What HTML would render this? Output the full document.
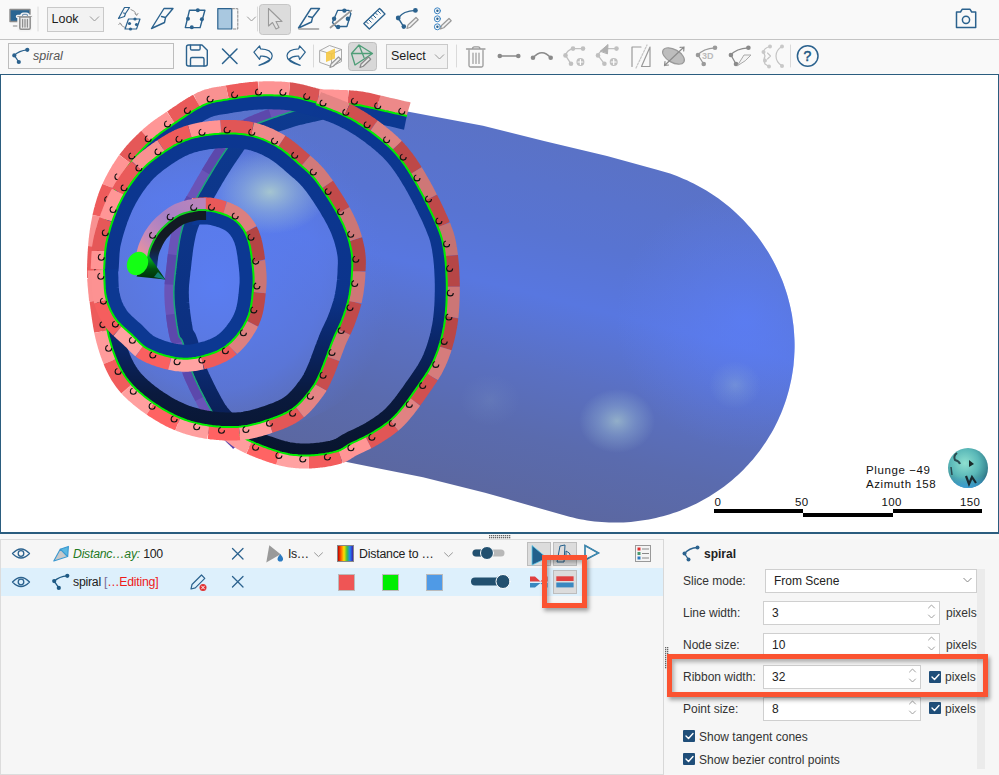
<!DOCTYPE html>
<html><head><meta charset="utf-8">
<style>
*{box-sizing:border-box;margin:0;padding:0}
html,body{width:999px;height:775px;overflow:hidden;background:#f8f8f8;font-family:"Liberation Sans",sans-serif;color:#222}
.abs{position:absolute}
#tb1{left:0;top:0;width:999px;height:39px;background:#f9f9f9}
#sep1{left:0;top:39px;width:999px;height:1px;background:#c4c4c4}
#tb2{left:0;top:40px;width:999px;height:34px;background:#f9f9f9}
#vp{left:0;top:74px;width:999px;height:460px;border:1px solid #2b5d7f;border-width:1px 1px 2px 1px;background:#fff;overflow:hidden}
.dd{border:1px solid #c9c9c9;background:#f2f2f2;font-size:12.5px;color:#222}
.sepv{width:1px;background:#dcdcdc}
.txt{white-space:nowrap}
#panelL{left:0;top:539px;width:664px;height:236px;border:1px solid #dcdcdc;border-right-color:#d8d8d8;background:#f6f6f6}
#panelR{left:664px;top:539px;width:335px;height:236px;background:#f6f6f6}
.lbl{font-size:12px;color:#333}
.inp{background:#fff;border:1px solid #cfcfcf;font-size:12.5px;color:#222}
.hud{font-size:11.5px;color:#111;letter-spacing:0.35px}
.chk{width:12px;height:12px;background:#1f4e79;border-radius:1px}
</style></head>
<body>
<div id="tb1" class="abs">
<svg class="abs" style="left:0;top:0" width="999" height="39">
<g fill="none" stroke-linejoin="round" stroke-linecap="round">
<!-- monitor trash -->
<rect x="10" y="9.5" width="20" height="12" fill="#2a6592" stroke="#8c8c8c" stroke-width="1.4"/>
<path d="M13.5 26 h4" stroke="#aaa" stroke-width="1.5"/>
<path d="M17.5 16.5 h14 M19 17.5 v10.5 q0 2 2 2 h7.5 q2 0 2-2 V17.5 M21.8 16 q0-1.8 1.8-1.8 h2.6 q1.8 0 1.8 1.8" stroke="#f4f4f4" stroke-width="3.4"/>
<path d="M19.8 17 h10.4 v11 q0 1.2-1.2 1.2 h-8 q-1.2 0-1.2-1.2 Z" fill="#ececec" stroke="#8f8f8f" stroke-width="1.5"/>
<path d="M17.8 16.5 h13.5" stroke="#9a9a9a" stroke-width="1.2"/>
<path d="M22.5 15.6 q0-1.2 1.2-1.2 h2.6 q1.2 0 1.2 1.2" stroke="#7a9ab8" stroke-width="1.2"/>
<path d="M22.6 19.5 v7.5 M25 19.5 v7.5 M27.4 19.5 v7.5" stroke="#8f8f8f" stroke-width="1.3"/>
<path d="M38 7 v24" stroke="#dadada" stroke-width="1"/>
<!-- icon cycle -->
<path d="M118.5 18.5 L124.5 7.5 H129.5 L125.5 13.5 L124.5 16.5 Z M123.5 13 l2 0.5" stroke="#2b628e" stroke-width="1.2"/>
<path d="M131 9.5 q4.5 1 5.5 5.5 M135 13.8 l1.6 1.6 l1.4-2" stroke="#999" stroke-width="1"/>
<path d="M126 28 q-4.5-1-6-5 M121.5 24.8 l-1.2-1.8 l-1.6 1.6" stroke="#999" stroke-width="1"/>
<path d="M128.5 19 H140 L136.5 29 H125 Z" stroke="#2b628e" stroke-width="1.2"/>
<circle cx="135" cy="19" r="1.6" fill="#2b628e"/><circle cx="129.5" cy="23.5" r="1.6" fill="#2b628e"/><circle cx="136.5" cy="24.5" r="1.6" fill="#2b628e"/><circle cx="130.5" cy="29" r="1.6" fill="#2b628e"/>
<!-- knife -->
<path d="M151.5 28.5 L164 8.5 H173 L165.5 17.5 L164.5 22.5 Z M161.5 16.5 L165.5 17.5" stroke="#2b628e" stroke-width="1.4"/>
<!-- plane dots -->
<path d="M189.5 10.2 H204.9 L200.1 27.6 H185.3 Z" stroke="#2b628e" stroke-width="1.4"/>
<circle cx="197.8" cy="10.2" r="2" fill="#2b628e"/><circle cx="188" cy="18.8" r="2" fill="#2b628e"/><circle cx="201.9" cy="19.2" r="2" fill="#2b628e"/><circle cx="191.8" cy="27.3" r="2" fill="#2b628e"/>
<!-- box split -->
<rect x="217.8" y="8.7" width="14" height="20.3" fill="#a9c8e0" stroke="#2b628e" stroke-width="1.2"/>
<path d="M232 8.7 h5.8 v20.3 h-5.8" stroke="#888" stroke-width="1" stroke-dasharray="2.5 1.5"/>
<path d="M247.5 17 l4 4 l4-4" stroke="#999" stroke-width="1"/>
<path d="M257.5 7 v24" stroke="#dadada" stroke-width="1"/>
</g>
<rect x="259.5" y="4.5" width="31" height="30" rx="3" fill="#dcdcdc" stroke="#c6c6c6"/>
<g fill="none" stroke-linejoin="round" stroke-linecap="round">
<path d="M268.5 8.5 V26 L272.5 22.5 L276 29 L279 27.5 L276 21.5 H282 Z" stroke="#9a9a9a" stroke-width="1.1" fill="#e2e2e2"/>
<!-- knife line -->
<path d="M298.5 28 L311 8.5 H319.5 L312.5 17.5 L311.5 22 Z M308.5 16.5 L312.5 17.5" stroke="#2b628e" stroke-width="1.4"/>
<path d="M299 29 H318.5" stroke="#999" stroke-width="1.6"/>
<!-- plane cut -->
<path d="M337.6 10.4 H348.9 L350.9 13.8 L346.9 26.5 H336 L332.5 22.5 L334.1 18.7 Z" stroke="#2b628e" stroke-width="1.3"/>
<circle cx="344.4" cy="10.6" r="2.2" fill="#2b628e"/><circle cx="334.1" cy="18.7" r="2.2" fill="#2b628e"/><circle cx="347.9" cy="18.7" r="2.2" fill="#2b628e"/><circle cx="338.1" cy="27" r="2.2" fill="#2b628e"/>
<path d="M330.5 27.5 L351.3 10.6" stroke="#999" stroke-width="1.8"/>
<!-- ruler -->
<path d="M363.8 23.5 L379.5 8.5 L385 14 L369.3 29 Z" stroke="#2b628e" stroke-width="1.3"/>
<path d="M366.5 22 l1.6 1.6 M368.8 19.8 l2.4 2.4 M371.1 17.6 l1.6 1.6 M373.4 15.4 l2.4 2.4 M375.7 13.2 l1.6 1.6 M378 11 l2.4 2.4 M380.3 8.8 l1.6 1.6" stroke="#2b628e" stroke-width="1"/>
<!-- curve pencil -->
<path d="M415.4 10.4 Q403 11 398.2 18 L403.8 26.8" stroke="#2b628e" stroke-width="1.4"/>
<circle cx="415.4" cy="10.4" r="2.4" fill="#2b628e"/><circle cx="398.2" cy="18" r="2.4" fill="#2b628e"/><circle cx="403.8" cy="26.6" r="2.3" fill="#2b628e"/>
<path d="M407 28.5 L408 25 L416 17.5 L418.2 19.7 L410.3 27.3 Z" stroke="#999" stroke-width="1.2" fill="#f0f0f0"/>
<!-- dots pencil -->
<circle cx="437.4" cy="10.8" r="3" stroke="#3a84c4" stroke-width="1"/><circle cx="437.4" cy="10.8" r="1.2" fill="#2b628e"/>
<circle cx="437.4" cy="18.8" r="3" stroke="#3a84c4" stroke-width="1"/><circle cx="437.4" cy="18.8" r="1.2" fill="#2b628e"/>
<circle cx="437.4" cy="26.8" r="3" stroke="#3a84c4" stroke-width="1"/><circle cx="437.4" cy="26.8" r="1.2" fill="#2b628e"/>
<path d="M440.5 29 L441.5 25.5 L449 18.5 L451.2 20.7 L443.8 27.8 Z" stroke="#999" stroke-width="1.2" fill="#f0f0f0"/>
<!-- camera -->
<path d="M956.5 12 h4 l1.8-2.8 h7.6 l1.8 2.8 h4 v15.5 h-19.2 Z" stroke="#2b628e" stroke-width="1.5"/>
<circle cx="966" cy="19.8" r="3.6" stroke="#2b628e" stroke-width="1.5"/>
</g>
</svg>
<div class="abs dd" style="left:47px;top:7px;width:57px;height:25px"></div>
<div class="abs txt" style="left:51.5px;top:12.2px;font-size:12.5px;color:#1d1d1d">Look</div>
<svg class="abs" style="left:89px;top:15px" width="11" height="8"><path d="M1 1.5 l4.5 4.5 l4.5-4.5" fill="none" stroke="#999" stroke-width="1"/></svg>

</div>
<div id="sep1" class="abs"></div>
<div id="tb2" class="abs">
<div class="abs" style="left:8px;top:3px;width:166px;height:26px;border:1px solid #bdbdbd;background:#f8f8f8"></div>
<svg class="abs" style="left:0;top:0" width="999" height="34">
<g fill="none" stroke-linejoin="round" stroke-linecap="round">
<path d="M27.3 9.8 Q19 10.5 14.3 15.4 L18.8 22" stroke="#2b628e" stroke-width="1.3"/>
<circle cx="27.3" cy="9.8" r="2.1" fill="#2b628e"/><circle cx="14.3" cy="15.4" r="2.1" fill="#2b628e"/><circle cx="18.8" cy="22" r="2.1" fill="#2b628e"/>
<!-- save -->
<path d="M186.5 7 q0-2 2-2 h13.5 l5.3 5.3 v13.7 q0 2-2 2 h-16.8 q-2 0-2-2 Z" stroke="#2b628e" stroke-width="1.4"/>
<path d="M190.5 5.2 v3.5 q0 1.3 1.3 1.3 h7 q1.3 0 1.3-1.3 v-3.5 M190.5 26 v-7 q0-1.5 1.5-1.5 h10.5 q1.5 0 1.5 1.5 v7" stroke="#2b628e" stroke-width="1.4"/>
<!-- X -->
<path d="M222.5 9 L237 23.5 M237 9 L222.5 23.5" stroke="#2b628e" stroke-width="1.5"/>
<!-- undo -->
<path d="M253.9 12.2 L259.6 5.9 L260.5 8.8 Q271.5 9.2 272.2 15.8 Q272.5 21.8 259 25.4 Q269.5 20.5 269.8 19 Q266.5 15.6 260.5 16.2 L259.6 19.4 Z" stroke="#2b628e" stroke-width="1.2"/>
<!-- redo -->
<path d="M 305.3 12.2 L 299.6 5.9 L 298.7 8.8 Q 287.7 9.2 287.0 15.8 Q 286.7 21.8 300.2 25.4 Q 289.7 20.5 289.4 19.0 Q 292.7 15.6 298.7 16.2 L 299.6 19.4 Z" stroke="#2b628e" stroke-width="1.2"/>
<path d="M313.5 5 v22" stroke="#dadada" stroke-width="1"/>
<!-- cube pencil -->
<path d="M320 10.5 L329.5 5.5 L341.5 9.5 L341.5 21.5 L331.5 26.5 L320 22.5 Z M320 10.5 L331.5 14 L341.5 9.5 M331.5 14 V26.5" stroke="#a0a0a0" stroke-width="0.9"/>
<path d="M326 12.5 L335 8.5 V18.5 L326 22 Z" fill="#f5c842" stroke="none" opacity="0.9"/>
<path d="M330 27.5 L331 24 L338.5 17 L340.7 19.2 L333.3 26.3 Z" stroke="#999" stroke-width="1.2" fill="#f0f0f0"/>
</g>
<rect x="348.5" y="2.5" width="28" height="28" rx="3" fill="#d8d8d8" stroke="#bfbfbf"/>
<g fill="none" stroke-linejoin="round" stroke-linecap="round">
<path d="M351.5 13.5 L359 5 L372.5 13.5 L355 25 Z M359 5 L364 17.5 M351.5 13.5 L372.5 13.5" stroke="#4f9e78" stroke-width="1.3"/>
<path d="M360 27.5 L361 24 L368.5 17 L370.7 19.2 L363.3 26.3 Z" stroke="#888" stroke-width="1.2" fill="#e6e6e6"/>
<path d="M456.5 5 v22" stroke="#dadada" stroke-width="1"/>
</g>
</svg>
<div class="abs txt" style="left:33px;top:9px;font-size:12.5px;font-style:italic;color:#555">spiral</div>
<div class="abs dd" style="left:386px;top:4px;width:62px;height:25px"></div>
<div class="abs txt" style="left:391px;top:9px;font-size:12.5px;color:#1d1d1d">Select</div>
<svg class="abs" style="left:434px;top:13px" width="11" height="8"><path d="M1 1.5 l4.5 4.5 l4.5-4.5" fill="none" stroke="#999" stroke-width="1"/></svg>
<svg class="abs" style="left:0;top:0" width="999" height="34">
<g fill="none" stroke-linejoin="round" stroke-linecap="round">
<!-- trash -->
<path d="M466.5 9 H485 M469 10.5 V25.5 q0 1.5 1.5 1.5 h11 q1.5 0 1.5-1.5 V10.5 M472.5 8.8 q0-2 2-2 h3.5 q2 0 2 2" stroke="#9a9a9a" stroke-width="1.3"/>
<path d="M473 13 v10.5 M476 13 v10.5 M479 13 v10.5" stroke="#9a9a9a" stroke-width="1.2"/>
<!-- line -->
<path d="M500 16 H518" stroke="#8a8a8a" stroke-width="1.5"/>
<circle cx="499.8" cy="16" r="2.3" fill="#8a8a8a"/><circle cx="518.3" cy="16" r="2.3" fill="#8a8a8a"/>
<!-- arc -->
<path d="M533 17.8 Q542 7.5 550.7 17.8" stroke="#8a8a8a" stroke-width="1.5"/>
<circle cx="533" cy="17.8" r="2.3" fill="#8a8a8a"/><circle cx="550.7" cy="17.8" r="2.3" fill="#8a8a8a"/>
<!-- node add -->
<path d="M583 8.6 H573 Q567 10 565.5 15.4 L571 23.8" stroke="#c0c0c0" stroke-width="1.3"/>
<circle cx="573" cy="8.6" r="2.3" fill="#c0c0c0"/><circle cx="583" cy="8.6" r="2.3" fill="#c0c0c0"/><circle cx="565.5" cy="15.4" r="2.3" fill="#c0c0c0"/><circle cx="571" cy="23.8" r="2.3" fill="#c0c0c0"/>
<circle cx="580.4" cy="22" r="4" fill="#c0c0c0"/><path d="M578 22 h4.8 M580.4 19.6 v4.8" stroke="#fff" stroke-width="1.2"/>
<!-- node add 2 -->
<path d="M616.5 8.6 H607 Q600 10 598 15.4 L604.4 23.8" stroke="#c0c0c0" stroke-width="1.3"/>
<path d="M600.5 11 L608 4.5 L607.5 13.5 Z" fill="#b0b0b0" stroke="#b0b0b0" stroke-width="1"/>
<circle cx="616.5" cy="8.6" r="2.3" fill="#c0c0c0"/><circle cx="598" cy="15.4" r="2.3" fill="#c0c0c0"/><circle cx="604.4" cy="23.8" r="2.3" fill="#c0c0c0"/>
<circle cx="613.7" cy="22" r="4" fill="#c0c0c0"/><path d="M611.3 22 h4.8 M613.7 19.6 v4.8" stroke="#fff" stroke-width="1.2"/>
<!-- slash -->
<path d="M632 26.5 V7 L641 7 M650 7 V26.5 H641.5 Z" stroke="#9a9a9a" stroke-width="1.2"/>
<path d="M636 28 L647 5" stroke="#c4c4c4" stroke-width="1.2" stroke-dasharray="2 1.5"/>
<!-- disc -->
<ellipse cx="673.5" cy="16" rx="12" ry="6.5" transform="rotate(30 673.5 16)" fill="#bdbdbd" stroke="#9a9a9a" stroke-width="1.2"/>
<path d="M664.5 25.5 L684 7 M664.5 25.5 l0.5-4 M664.5 25.5 l4-0.5 M684 7 l-4 0.3 M684 7 l-0.3 4" stroke="#8c8c8c" stroke-width="1.2"/>
<!-- 3d curve -->
<path d="M715 7.8 Q703 8.5 698 15 L703.7 24" stroke="#9a9a9a" stroke-width="1.3"/>
<circle cx="715" cy="7.8" r="2.3" fill="#9a9a9a"/><circle cx="698" cy="15" r="2.3" fill="#9a9a9a"/><circle cx="703.7" cy="24" r="2.3" fill="#9a9a9a"/>
<!-- curve knife -->
<path d="M748.4 7.8 Q736 8.5 730.9 15 L736 24" stroke="#8a8a8a" stroke-width="1.3"/>
<circle cx="748.4" cy="7.8" r="2.3" fill="#8a8a8a"/><circle cx="730.9" cy="15" r="2.3" fill="#8a8a8a"/><circle cx="736" cy="24" r="2.3" fill="#8a8a8a"/>
<path d="M737.5 25.5 L744 15 H751 L745.5 20.5 Z" stroke="#aaa" stroke-width="1" fill="#f4f4f4"/>
<!-- split -->
<path d="M770 6.5 Q764 8 763.5 12 L765 16 Q763 20 765 24 L769 26.5 M782 6.5 Q776 10 776 16 Q776 22 782 26" stroke="#c4c4c4" stroke-width="1.2"/>
<path d="M767.5 13 l3 3 l-3 3" stroke="#c4c4c4" stroke-width="1.1"/>
<circle cx="770" cy="6.5" r="2" fill="#c8c8c8"/><circle cx="763.5" cy="12" r="2" fill="#c8c8c8"/><circle cx="765" cy="20.5" r="2" fill="#c8c8c8"/><circle cx="769" cy="26.5" r="2" fill="#c8c8c8"/><circle cx="782" cy="6.5" r="2" fill="#c8c8c8"/><circle cx="782" cy="26" r="2" fill="#c8c8c8"/>
<path d="M790.5 5 v22" stroke="#dadada" stroke-width="1"/>
<!-- help -->
<circle cx="807.7" cy="16" r="10.3" stroke="#2b628e" stroke-width="1.5"/>
</g>
</svg>
<div class="abs txt" style="left:702px;top:11px;font-size:9px;font-weight:bold;color:#bbb">3D</div>
<div class="abs txt" style="left:803.6px;top:8px;font-size:14px;color:#1f5a84;-webkit-text-stroke:0.5px #1f5a84">?</div>


</div>
<div id="vp" class="abs">
<svg class="abs" style="left:-1px;top:-1px" width="999" height="460" viewBox="0 74 999 460">
<defs>
<linearGradient id="capg" gradientUnits="userSpaceOnUse" x1="680" y1="173" x2="590" y2="527">
<stop offset="0" stop-color="#5a72c6"/><stop offset="0.25" stop-color="#5874d2"/><stop offset="0.42" stop-color="#5877e0"/><stop offset="0.62" stop-color="#5a70c2"/><stop offset="0.8" stop-color="#5a6bae"/><stop offset="1" stop-color="#5b67a0"/>
</linearGradient>
<radialGradient id="capr" gradientUnits="userSpaceOnUse" cx="745" cy="320" r="130"><stop offset="0" stop-color="#5c80ff" stop-opacity="0.6"/><stop offset="1" stop-color="#6080f8" stop-opacity="0"/></radialGradient>
<radialGradient id="inr" gradientUnits="userSpaceOnUse" cx="215" cy="285" r="175"><stop offset="0" stop-color="#5a7ef4" stop-opacity="0.95"/><stop offset="0.6" stop-color="#5a7cf0" stop-opacity="0.6"/><stop offset="1" stop-color="#5a78e0" stop-opacity="0"/></radialGradient>
<radialGradient id="hl" cx="0.5" cy="0.5" r="0.5"><stop offset="0" stop-color="#a9c9cf" stop-opacity="0.95"/><stop offset="0.5" stop-color="#98b8d4" stop-opacity="0.5"/><stop offset="1" stop-color="#98b8d4" stop-opacity="0"/></radialGradient>
<linearGradient id="bandg" gradientUnits="userSpaceOnUse" x1="0" y1="90" x2="0" y2="460">
<stop offset="0" stop-color="#0c3892"/><stop offset="0.55" stop-color="#0c348c"/><stop offset="0.7" stop-color="#0a2462"/><stop offset="0.82" stop-color="#0a1a3e"/><stop offset="1" stop-color="#08142c"/>
</linearGradient>
<linearGradient id="s0g" gradientUnits="userSpaceOnUse" x1="0" y1="236" x2="0" y2="268"><stop offset="0" stop-color="#121a24"/><stop offset="0.4" stop-color="#142030"/><stop offset="1" stop-color="#0c3a8a"/></linearGradient>
<linearGradient id="s0p" gradientUnits="userSpaceOnUse" x1="140" y1="262" x2="200" y2="205"><stop offset="0" stop-color="#f49494"/><stop offset="0.25" stop-color="#c88ab8"/><stop offset="0.6" stop-color="#a880c4"/><stop offset="1" stop-color="#b884bc"/></linearGradient>
<linearGradient id="kband" gradientUnits="userSpaceOnUse" x1="0" y1="110" x2="0" y2="440">
<stop offset="0" stop-color="#0d3a90"/><stop offset="0.7" stop-color="#0c3080"/><stop offset="1" stop-color="#0a1a48"/>
</linearGradient>
</defs>
<path d="M408.6 111.7 L483.0 125.7 L545.0 141.2 L607.0 156.0 L656.1 169.4 L659.6 170.4 L663.1 171.4 L666.6 172.5 L670.1 173.6 L673.5 174.8 L676.9 176.1 L680.3 177.5 L683.7 178.9 L687.0 180.3 L690.3 181.9 L693.6 183.5 L696.8 185.2 L700.0 186.9 L703.2 188.7 L706.3 190.6 L709.4 192.5 L712.5 194.5 L715.5 196.5 L718.5 198.6 L721.4 200.8 L724.3 203.0 L727.2 205.3 L730.0 207.6 L732.8 210.0 L735.5 212.4 L738.1 214.9 L740.7 217.5 L743.3 220.0 L745.8 222.7 L748.2 225.4 L750.6 228.1 L753.0 230.9 L755.3 233.7 L757.5 236.6 L759.7 239.5 L761.8 242.4 L763.8 245.4 L765.8 248.5 L767.8 251.5 L769.6 254.6 L771.4 257.8 L773.2 260.9 L774.9 264.2 L776.5 267.4 L778.0 270.7 L779.5 274.0 L780.9 277.3 L782.3 280.6 L783.6 284.0 L784.8 287.4 L785.9 290.8 L787.0 294.3 L788.0 297.8 L788.9 301.2 L789.8 304.7 L790.6 308.3 L791.3 311.8 L792.0 315.3 L792.5 318.9 L793.0 322.4 L793.5 326.0 L793.8 329.6 L794.1 333.2 L794.3 336.8 L794.5 340.3 L794.6 343.9 L794.6 347.5 L794.5 351.1 L794.3 354.7 L794.1 358.3 L793.8 361.8 L793.5 365.4 L793.0 369.0 L792.5 372.5 L791.9 376.1 L791.3 379.6 L790.5 383.1 L789.7 386.6 L788.9 390.0 L787.9 393.5 L786.9 396.9 L785.9 400.3 L784.7 403.7 L783.5 407.1 L782.2 410.4 L780.9 413.8 L779.4 417.0 L778.0 420.3 L776.4 423.5 L774.8 426.7 L773.1 429.9 L771.4 433.0 L769.5 436.1 L767.7 439.1 L765.7 442.2 L763.7 445.1 L761.7 448.1 L759.6 451.0 L757.4 453.8 L755.2 456.6 L752.9 459.4 L750.5 462.1 L748.1 464.7 L745.7 467.3 L743.2 469.9 L740.6 472.4 L738.0 474.9 L735.3 477.3 L732.6 479.7 L729.9 482.0 L727.0 484.2 L724.2 486.4 L721.3 488.5 L718.4 490.6 L715.4 492.6 L712.3 494.6 L709.3 496.5 L706.2 498.3 L703.0 500.1 L699.9 501.8 L696.7 503.4 L693.4 505.0 L690.1 506.5 L686.8 508.0 L683.5 509.3 L680.1 510.7 L676.7 511.9 L673.3 513.1 L669.9 514.2 L666.4 515.3 L662.9 516.2 L659.4 517.1 L655.9 518.0 L652.3 518.8 L648.8 519.5 L645.2 520.1 L641.6 520.6 L638.0 521.1 L634.4 521.5 L630.8 521.9 L627.2 522.2 L623.5 522.4 L619.9 522.5 L616.3 522.5 L612.6 522.5 L609.0 522.4 L605.4 522.3 L601.7 522.0 L598.1 521.7 L594.5 521.4 L590.8 520.9 L587.2 520.4 L583.6 519.8 L580.1 519.2 L576.5 518.4 L572.9 517.6 L569.4 516.8 L565.9 515.8 L562.3 514.8 L485.0 492.7 L423.0 477.2 L376.5 468.0 L345.5 461.7 L300.0 458.0 L240.0 445.0 L170.0 420.0 L120.0 380.0 L98.0 320.0 L96.0 250.0 L112.0 185.0 L160.0 130.0 L230.0 100.0 L300.0 92.0 L360.0 98.0 Z" fill="url(#capg)"/>
<path d="M408.6 111.7 L483.0 125.7 L545.0 141.2 L607.0 156.0 L656.1 169.4 L659.6 170.4 L663.1 171.4 L666.6 172.5 L670.1 173.6 L673.5 174.8 L676.9 176.1 L680.3 177.5 L683.7 178.9 L687.0 180.3 L690.3 181.9 L693.6 183.5 L696.8 185.2 L700.0 186.9 L703.2 188.7 L706.3 190.6 L709.4 192.5 L712.5 194.5 L715.5 196.5 L718.5 198.6 L721.4 200.8 L724.3 203.0 L727.2 205.3 L730.0 207.6 L732.8 210.0 L735.5 212.4 L738.1 214.9 L740.7 217.5 L743.3 220.0 L745.8 222.7 L748.2 225.4 L750.6 228.1 L753.0 230.9 L755.3 233.7 L757.5 236.6 L759.7 239.5 L761.8 242.4 L763.8 245.4 L765.8 248.5 L767.8 251.5 L769.6 254.6 L771.4 257.8 L773.2 260.9 L774.9 264.2 L776.5 267.4 L778.0 270.7 L779.5 274.0 L780.9 277.3 L782.3 280.6 L783.6 284.0 L784.8 287.4 L785.9 290.8 L787.0 294.3 L788.0 297.8 L788.9 301.2 L789.8 304.7 L790.6 308.3 L791.3 311.8 L792.0 315.3 L792.5 318.9 L793.0 322.4 L793.5 326.0 L793.8 329.6 L794.1 333.2 L794.3 336.8 L794.5 340.3 L794.6 343.9 L794.6 347.5 L794.5 351.1 L794.3 354.7 L794.1 358.3 L793.8 361.8 L793.5 365.4 L793.0 369.0 L792.5 372.5 L791.9 376.1 L791.3 379.6 L790.5 383.1 L789.7 386.6 L788.9 390.0 L787.9 393.5 L786.9 396.9 L785.9 400.3 L784.7 403.7 L783.5 407.1 L782.2 410.4 L780.9 413.8 L779.4 417.0 L778.0 420.3 L776.4 423.5 L774.8 426.7 L773.1 429.9 L771.4 433.0 L769.5 436.1 L767.7 439.1 L765.7 442.2 L763.7 445.1 L761.7 448.1 L759.6 451.0 L757.4 453.8 L755.2 456.6 L752.9 459.4 L750.5 462.1 L748.1 464.7 L745.7 467.3 L743.2 469.9 L740.6 472.4 L738.0 474.9 L735.3 477.3 L732.6 479.7 L729.9 482.0 L727.0 484.2 L724.2 486.4 L721.3 488.5 L718.4 490.6 L715.4 492.6 L712.3 494.6 L709.3 496.5 L706.2 498.3 L703.0 500.1 L699.9 501.8 L696.7 503.4 L693.4 505.0 L690.1 506.5 L686.8 508.0 L683.5 509.3 L680.1 510.7 L676.7 511.9 L673.3 513.1 L669.9 514.2 L666.4 515.3 L662.9 516.2 L659.4 517.1 L655.9 518.0 L652.3 518.8 L648.8 519.5 L645.2 520.1 L641.6 520.6 L638.0 521.1 L634.4 521.5 L630.8 521.9 L627.2 522.2 L623.5 522.4 L619.9 522.5 L616.3 522.5 L612.6 522.5 L609.0 522.4 L605.4 522.3 L601.7 522.0 L598.1 521.7 L594.5 521.4 L590.8 520.9 L587.2 520.4 L583.6 519.8 L580.1 519.2 L576.5 518.4 L572.9 517.6 L569.4 516.8 L565.9 515.8 L562.3 514.8 L485.0 492.7 L423.0 477.2 L376.5 468.0 L345.5 461.7 L300.0 458.0 L240.0 445.0 L170.0 420.0 L120.0 380.0 L98.0 320.0 L96.0 250.0 L112.0 185.0 L160.0 130.0 L230.0 100.0 L300.0 92.0 L360.0 98.0 Z" fill="url(#capr)"/>
<ellipse cx="250" cy="270" rx="160" ry="160" fill="url(#inr)"/>
<ellipse cx="270" cy="192" rx="58" ry="42" fill="url(#hl)"/>
<ellipse cx="617" cy="421" rx="38" ry="32" fill="url(#hl)" opacity="0.75"/>
<ellipse cx="735" cy="385" rx="26" ry="24" fill="url(#hl)" opacity="0.3"/>
<ellipse cx="490" cy="400" rx="30" ry="26" fill="url(#hl)" opacity="0.12"/>
<path d="M245.3 436.7L243.8 435.2L242.3 433.7L240.8 432.3L239.3 430.8L237.8 429.4L236.3 427.9L234.9 426.5L233.5 425.1L232.1 423.7L230.8 422.3L229.5 420.9L228.0 419.3L226.7 417.9L225.4 416.6L224.3 415.5L223.3 414.3L222.2 413.1L221.2 411.8L220.1 410.3L218.8 408.4L217.4 406.1L216.7 404.9L215.9 403.5L215.1 402.0L214.2 400.4L213.3 398.7L212.4 397.0L211.4 395.2L210.4 393.4L209.5 391.5L208.5 389.6L207.5 387.6L206.6 385.7L205.6 383.7L204.7 381.8L203.8 379.9L202.9 378.0L202.0 376.1L201.2 374.3L200.5 372.6L199.8 370.9L199.0 369.1L198.2 367.1L197.5 365.1L196.8 363.0L196.1 360.9L195.4 358.8L194.8 356.7L194.2 354.7L193.6 352.6L193.0 350.6L192.5 348.7L191.9 346.9L191.4 345.1L190.9 343.4L190.4 341.7L189.9 340.2L188.7 337.1L186.3 333.3L185.0 332.3L186.2 334.0L185.7 331.9L185.5 330.8L185.2 329.3L185.0 327.7L184.7 325.9L184.3 324.0L184.0 322.0L183.7 319.9L183.4 317.8L183.1 315.6L182.8 313.4L182.6 311.2L182.3 309.0L182.1 306.8L181.9 304.7L181.7 302.7L181.6 300.8L181.5 299.0L181.4 297.0L181.4 295.0L181.3 293.2L181.3 291.4L181.4 289.7L181.4 288.0L181.5 286.3L181.6 284.5L181.8 282.7L182.0 280.8L182.2 278.8L182.4 276.7L182.7 274.4L182.9 271.9L183.1 270.2L183.4 268.4L183.6 266.5L183.8 264.7L184.0 262.7L184.2 260.7L184.5 258.7L184.7 256.6L185.0 254.6L185.2 252.5L185.5 250.4L185.8 248.3L186.1 246.2L186.5 244.1L186.8 242.1L187.2 240.1L187.6 238.1L188.0 236.2L188.4 234.3L188.8 232.6L189.3 230.8L189.8 229.2L190.4 227.3L191.0 225.5L191.7 223.7L192.4 222.0L193.1 220.3L193.9 218.7L194.6 217.0L195.5 215.4L196.3 213.8L197.2 212.1L198.1 210.5L199.1 208.8L200.1 207.1L201.1 205.3L202.1 203.5L203.2 201.6L204.3 199.7L205.5 197.7L206.5 195.9L207.4 194.3L208.3 192.6L209.3 190.9L210.3 189.2L211.3 187.4L212.3 185.7L213.4 183.8L214.5 182.0L215.5 180.2L216.6 178.3L217.7 176.5L218.8 174.7L219.9 172.9L221.0 171.1L222.1 169.3L223.2 167.6L224.3 165.9L225.3 164.3L226.3 162.7L227.4 161.1L228.3 159.7L229.3 158.3L230.2 156.9L231.4 155.2L232.9 153.0L234.2 151.1L235.4 149.3L236.5 147.7L237.5 146.2L238.4 144.9L239.3 143.7L240.3 142.7L241.3 141.6L242.3 140.6L243.6 139.6L245.0 138.5L246.7 137.3L248.2 136.4L249.4 135.7L250.8 134.9L252.3 134.1L253.9 133.4L255.5 132.6L257.3 131.8L259.1 131.1L261.0 130.3L262.9 129.5L264.8 128.8L266.8 128.0L268.8 127.3L270.8 126.6L272.8 125.8L274.8 125.1L276.8 124.5L278.7 123.8L280.7 123.1L282.6 122.5L284.4 121.9L286.2 121.3L288.0 120.7L290.0 120.1L292.0 119.4L294.0 118.9L295.9 118.3L297.9 117.8L299.8 117.3L301.7 116.9L303.5 116.4L305.4 116.0L307.3 115.6L309.2 115.2L311.0 114.8L313.0 114.3L314.9 113.9L316.8 113.5L318.8 113.0L320.8 112.5L321.8 112.3" stroke="url(#kband)" stroke-width="15" fill="none"/>
<path d="M236.6 445.4L235.2 443.9L233.7 442.5L232.2 441.0L230.7 439.6L229.2 438.1L227.7 436.7L226.2 435.2L224.8 433.7L223.3 432.2L221.9 430.7L220.5 429.2L219.2 427.8L217.9 426.4L216.6 425.2L215.4 423.9L214.1 422.5L212.8 420.9L211.4 419.2L210.0 417.3L208.5 415.0L206.9 412.4L206.1 411.0L205.2 409.5L204.4 408.0L203.4 406.3L202.5 404.6L201.5 402.8L200.6 400.9L199.6 399.0L198.6 397.0L197.6 395.1L196.6 393.1L195.6 391.1L194.6 389.1L193.6 387.1L192.7 385.1L191.8 383.1L190.9 381.2L190.0 379.3L189.2 377.5L188.5 375.7L187.7 373.7L186.8 371.5L185.9 369.2L185.2 366.9L184.4 364.7L183.7 362.4L183.0 360.2L182.4 358.1L181.8 356.0L181.2 354.0L180.7 352.0L180.2 350.2L179.7 348.5L179.2 346.9L178.7 345.5L178.3 344.2L177.6 342.2L177.3 341.7L176.8 341.3L174.8 338.4L173.8 334.5L173.5 333.0L173.2 331.5L172.9 329.7L172.6 327.9L172.2 325.9L171.9 323.8L171.6 321.7L171.3 319.5L171.0 317.2L170.7 314.9L170.4 312.6L170.1 310.3L169.9 308.0L169.7 305.8L169.5 303.7L169.4 301.6L169.3 299.6L169.2 297.4L169.1 295.3L169.1 293.2L169.1 291.3L169.1 289.3L169.2 287.4L169.3 285.5L169.4 283.6L169.6 281.7L169.8 279.6L170.0 277.5L170.2 275.3L170.5 272.9L170.8 270.4L171.0 268.8L171.2 267.0L171.4 265.2L171.6 263.3L171.8 261.3L172.0 259.3L172.3 257.2L172.5 255.2L172.8 253.0L173.1 250.9L173.4 248.7L173.7 246.5L174.0 244.3L174.4 242.1L174.7 240.0L175.1 237.8L175.6 235.7L176.0 233.6L176.5 231.5L177.0 229.5L177.5 227.5L178.1 225.6L178.8 223.4L179.5 221.3L180.3 219.3L181.1 217.3L181.9 215.3L182.8 213.5L183.7 211.6L184.6 209.8L185.5 208.0L186.5 206.2L187.4 204.5L188.4 202.7L189.5 200.9L190.5 199.2L191.5 197.3L192.6 195.5L193.7 193.6L194.8 191.7L195.8 189.9L196.7 188.3L197.7 186.6L198.6 184.9L199.7 183.1L200.7 181.3L201.7 179.5L202.8 177.7L203.9 175.8L205.0 173.9L206.1 172.1L207.2 170.2L208.4 168.3L209.5 166.5L210.6 164.7L211.7 162.9L212.8 161.1L213.9 159.3L215.0 157.6L216.1 156.0L217.1 154.4L218.2 152.8L219.2 151.4L220.1 149.9L221.4 148.2L222.7 146.2L224.0 144.3L225.2 142.5L226.3 140.8L227.5 139.1L228.6 137.5L229.9 136.0L231.2 134.4L232.6 132.9L234.2 131.5L235.9 130.0L237.8 128.6L239.9 127.1L241.8 125.9L243.4 125.0L245.1 124.1L246.8 123.2L248.6 122.3L250.5 121.4L252.4 120.6L254.3 119.8L256.3 118.9L258.4 118.1L260.4 117.3L262.5 116.5L264.6 115.8L266.6 115.0L268.7 114.3L270.8 113.6L272.8 112.9L274.8 112.2L276.8 111.5L278.7 110.9L280.6 110.3L282.4 109.7L284.1 109.1L286.3 108.4L288.5 107.7L290.6 107.1L292.7 106.5L294.8 105.9L296.8 105.4L298.8 104.9L300.8 104.5L302.7 104.0L304.6 103.6L306.5 103.2L308.4 102.8L310.3 102.4L312.2 102.0L314.1 101.5L316.0 101.1L317.9 100.6L318.9 100.4" stroke="#6a54b8" stroke-width="9.5" fill="none"/>
<path d="M236.6 445.4L235.2 443.9L233.7 442.5L232.2 441.0L230.7 439.6L229.2 438.1L227.7 436.7L226.2 435.2L224.8 433.7L223.3 432.2L221.9 430.7L220.5 429.2L219.2 427.8L217.9 426.4L216.6 425.2L215.4 423.9L214.1 422.5L212.8 420.9L211.4 419.2L210.0 417.3L208.5 415.0L206.9 412.4L206.1 411.0L205.2 409.5L204.4 408.0L203.4 406.3L202.5 404.6L201.5 402.8L200.6 400.9L199.6 399.0L198.6 397.0L197.6 395.1L196.6 393.1L195.6 391.1L194.6 389.1L193.6 387.1L192.7 385.1L191.8 383.1L190.9 381.2L190.0 379.3L189.2 377.5L188.5 375.7L187.7 373.7L186.8 371.5L185.9 369.2L185.2 366.9L184.4 364.7L183.7 362.4L183.0 360.2L182.4 358.1L181.8 356.0L181.2 354.0L180.7 352.0L180.2 350.2L179.7 348.5L179.2 346.9L178.7 345.5L178.3 344.2L177.6 342.2L177.3 341.7L176.8 341.3L174.8 338.4L173.8 334.5L173.5 333.0L173.2 331.5L172.9 329.7L172.6 327.9L172.2 325.9L171.9 323.8L171.6 321.7L171.3 319.5L171.0 317.2L170.7 314.9L170.4 312.6L170.1 310.3L169.9 308.0L169.7 305.8L169.5 303.7L169.4 301.6L169.3 299.6L169.2 297.4L169.1 295.3L169.1 293.2L169.1 291.3L169.1 289.3L169.2 287.4L169.3 285.5L169.4 283.6L169.6 281.7L169.8 279.6L170.0 277.5L170.2 275.3L170.5 272.9L170.8 270.4L171.0 268.8L171.2 267.0L171.4 265.2L171.6 263.3L171.8 261.3L172.0 259.3L172.3 257.2L172.5 255.2L172.8 253.0L173.1 250.9L173.4 248.7L173.7 246.5L174.0 244.3L174.4 242.1L174.7 240.0L175.1 237.8L175.6 235.7L176.0 233.6L176.5 231.5L177.0 229.5L177.5 227.5L178.1 225.6L178.8 223.4L179.5 221.3L180.3 219.3L181.1 217.3L181.9 215.3L182.8 213.5L183.7 211.6L184.6 209.8L185.5 208.0L186.5 206.2L187.4 204.5L188.4 202.7L189.5 200.9L190.5 199.2L191.5 197.3L192.6 195.5L193.7 193.6L194.8 191.7L195.8 189.9L196.7 188.3L197.7 186.6L198.6 184.9L199.7 183.1L200.7 181.3L201.7 179.5L202.8 177.7L203.9 175.8L205.0 173.9L206.1 172.1L207.2 170.2L208.4 168.3L209.5 166.5L210.6 164.7L211.7 162.9L212.8 161.1L213.9 159.3L215.0 157.6L216.1 156.0L217.1 154.4L218.2 152.8L219.2 151.4L220.1 149.9L221.4 148.2L222.7 146.2L224.0 144.3L225.2 142.5L226.3 140.8L227.5 139.1L228.6 137.5L229.9 136.0L231.2 134.4L232.6 132.9L234.2 131.5L235.9 130.0L237.8 128.6L239.9 127.1L241.8 125.9L243.4 125.0L245.1 124.1L246.8 123.2L248.6 122.3L250.5 121.4L252.4 120.6L254.3 119.8L256.3 118.9L258.4 118.1L260.4 117.3L262.5 116.5L264.6 115.8L266.6 115.0L268.7 114.3L270.8 113.6L272.8 112.9L274.8 112.2L276.8 111.5L278.7 110.9L280.6 110.3L282.4 109.7L284.1 109.1L286.3 108.4L288.5 107.7L290.6 107.1L292.7 106.5L294.8 105.9L296.8 105.4L298.8 104.9L300.8 104.5L302.7 104.0L304.6 103.6L306.5 103.2L308.4 102.8L310.3 102.4L312.2 102.0L314.1 101.5L316.0 101.1L317.9 100.6L318.9 100.4" stroke="#5c48ac" stroke-width="9.5" fill="none" stroke-dasharray="30 30" stroke-dashoffset="0"/>
<path d="M240.0 442.0L238.5 440.5L237.1 439.1L235.6 437.6L234.1 436.2L232.6 434.7L231.1 433.3L229.6 431.8L228.1 430.4L226.7 428.9L225.3 427.5L224.0 426.0L222.6 424.5L221.3 423.1L220.1 421.9L218.8 420.6L217.7 419.3L216.5 417.9L215.2 416.3L213.9 414.5L212.5 412.5L211.0 410.0L210.2 408.7L209.4 407.2L208.5 405.7L207.6 404.0L206.7 402.3L205.7 400.5L204.8 398.7L203.8 396.8L202.8 394.9L201.8 392.9L200.8 391.0L199.8 389.0L198.9 387.0L197.9 385.0L197.0 383.0L196.1 381.1L195.2 379.2L194.4 377.4L193.6 375.6L192.9 373.8L192.1 371.9L191.2 369.8L190.4 367.6L189.7 365.4L188.9 363.2L188.2 361.0L187.6 358.9L187.0 356.8L186.4 354.7L185.8 352.7L185.2 350.8L184.7 348.9L184.2 347.2L183.7 345.5L183.3 344.0L182.8 342.6L181.9 340.2L180.8 338.4L180.0 337.8L179.2 336.7L178.4 333.5L178.1 332.2L177.9 330.6L177.6 328.9L177.3 327.1L176.9 325.2L176.6 323.1L176.3 321.0L176.0 318.8L175.7 316.6L175.4 314.3L175.1 312.0L174.9 309.8L174.6 307.6L174.4 305.4L174.2 303.3L174.1 301.3L174.0 299.4L173.9 297.2L173.9 295.2L173.8 293.2L173.8 291.3L173.9 289.5L173.9 287.6L174.0 285.8L174.2 284.0L174.3 282.1L174.5 280.1L174.7 278.0L174.9 275.8L175.2 273.5L175.5 271.0L175.7 269.3L175.9 267.5L176.1 265.7L176.3 263.8L176.5 261.9L176.8 259.9L177.0 257.8L177.3 255.7L177.5 253.6L177.8 251.5L178.1 249.3L178.4 247.2L178.7 245.1L179.1 242.9L179.4 240.8L179.8 238.7L180.2 236.6L180.6 234.6L181.1 232.6L181.6 230.7L182.1 228.8L182.6 227.0L183.3 224.9L184.0 222.9L184.7 221.0L185.5 219.1L186.2 217.3L187.1 215.5L187.9 213.7L188.8 212.0L189.7 210.2L190.6 208.5L191.6 206.8L192.6 205.1L193.6 203.3L194.6 201.5L195.7 199.7L196.7 197.9L197.8 196.0L198.9 194.0L199.9 192.2L200.9 190.6L201.8 188.9L202.8 187.2L203.8 185.5L204.8 183.7L205.8 181.9L206.9 180.1L208.0 178.2L209.1 176.4L210.2 174.5L211.3 172.6L212.4 170.8L213.5 169.0L214.6 167.2L215.8 165.4L216.9 163.6L217.9 161.9L219.0 160.2L220.1 158.6L221.1 157.0L222.1 155.5L223.1 154.0L224.0 152.7L225.3 150.9L226.7 148.8L228.0 146.9L229.2 145.1L230.3 143.5L231.4 141.9L232.4 140.4L233.5 139.0L234.7 137.6L236.0 136.3L237.4 135.0L238.9 133.7L240.6 132.4L242.5 131.1L244.3 130.0L245.8 129.1L247.3 128.3L248.9 127.4L250.7 126.6L252.4 125.8L254.3 125.0L256.2 124.1L258.1 123.3L260.1 122.5L262.1 121.8L264.2 121.0L266.2 120.2L268.2 119.5L270.3 118.8L272.3 118.1L274.3 117.4L276.3 116.7L278.3 116.0L280.2 115.4L282.1 114.8L283.9 114.2L285.6 113.6L287.8 112.9L289.9 112.2L291.9 111.6L294.0 111.1L296.0 110.5L298.0 110.0L299.9 109.6L301.8 109.1L303.8 108.7L305.7 108.3L307.6 107.8L309.4 107.4L311.3 107.0L313.2 106.6L315.2 106.2L317.1 105.7L319.0 105.2L320.0 105.0" stroke="#18a878" stroke-width="1.5" fill="none"/>
<path d="M405.4 122.8L403.4 122.4L401.4 121.9L399.4 121.4L397.3 120.9L395.3 120.5L393.3 120.0L391.3 119.5L389.3 119.1L387.3 118.6L385.3 118.1L383.3 117.7L381.4 117.3L379.5 116.8L377.4 116.4L375.3 115.9L373.3 115.4L371.3 114.9L369.4 114.5L367.5 114.0L365.6 113.6L363.7 113.2L361.9 112.9L360.0 112.5L358.1 112.2L356.1 111.9L354.3 111.7L352.4 111.6L350.4 111.4L348.4 111.3L346.2 111.1L344.1 111.0L342.0 111.0L339.9 110.9L337.8 110.8L335.8 110.7L333.9 110.7L332.1 110.6L330.4 110.5L328.2 110.4L326.2 110.4L324.5 110.4L322.8 110.4L320.6 110.2L317.9 109.9L315.4 109.4L313.6 109.0L311.8 108.6L309.9 108.1L308.0 107.6L306.0 107.1L304.0 106.5L301.9 106.0L299.9 105.4L297.8 104.9L295.7 104.5L293.7 104.1L291.7 103.7L289.7 103.4L287.9 103.2L286.1 103.1L284.1 102.9L282.2 102.7L280.2 102.6L278.2 102.5L276.2 102.4L274.1 102.4L272.1 102.3L270.0 102.3L268.0 102.3L266.0 102.3L264.0 102.3L262.0 102.4L260.0 102.5L258.0 102.5L256.1 102.7L254.1 102.8L252.1 103.0L250.1 103.2L248.1 103.4L246.1 103.7L244.1 103.9L242.1 104.2L240.1 104.5L238.2 104.8L236.2 105.1L234.3 105.4L232.5 105.7L230.6 106.0L228.6 106.4L226.4 106.7L224.3 107.0L222.4 107.3L220.6 107.6L218.8 107.9L217.1 108.2L215.5 108.5L213.8 108.9L212.2 109.4L210.5 109.9L208.7 110.6L206.8 111.4L205.5 112.0L204.0 112.8L202.4 113.6L200.8 114.5L199.2 115.5L197.5 116.5L195.7 117.6L194.0 118.7L192.2 119.8L190.5 121.0L188.7 122.2L186.9 123.4L185.2 124.5L183.5 125.7L181.9 126.8L180.2 127.9L178.7 129.0L176.9 130.2L175.1 131.4L173.3 132.6L171.6 133.7L170.0 134.8L168.5 135.9L166.9 136.9L165.5 138.0L164.0 139.1L162.6 140.2L161.2 141.3L159.7 142.5L158.2 143.8L156.7 145.2L155.4 146.4L154.0 147.7L152.6 149.0L151.3 150.3L149.9 151.7L148.5 153.0L147.1 154.4L145.8 155.9L144.4 157.3L143.1 158.8L141.8 160.3L140.5 161.8L139.3 163.3L138.0 164.9L136.9 166.5L135.7 168.1L134.6 169.6L133.6 171.1L132.6 172.7L131.5 174.3L130.5 175.9L129.5 177.6L128.5 179.2L127.5 180.9L126.6 182.6L125.6 184.4L124.7 186.1L123.9 187.8L123.0 189.6L122.2 191.4L121.4 193.1L120.6 194.9L119.9 196.7L119.2 198.4L118.5 200.2L117.9 201.9L117.3 203.7L116.7 205.5L116.2 207.3L115.6 209.1L115.1 210.9L114.6 212.7L114.2 214.6L113.7 216.4L113.3 218.3L112.9 220.2L112.5 222.2L112.1 224.1L111.8 226.1L111.4 228.1L111.1 230.1L110.8 232.0L110.5 233.8L110.2 235.7L110.0 237.7L109.8 239.6L109.6 241.6L109.4 243.6L109.2 245.7L109.0 247.7L108.9 249.8L108.7 251.8L108.6 253.9L108.5 255.9L108.4 257.9L108.3 259.9L108.2 261.8L108.1 263.8L108.1 265.6L108.0 267.5L108.0 269.2L108.0 271.2L108.0 273.3L108.0 275.4L108.1 277.4L108.2 279.3L108.3 281.2L108.5 283.1L108.7 285.0L108.8 286.9L109.0 288.7L109.2 290.6L109.4 292.5L109.6 294.5L109.8 296.5L109.9 298.5L110.0 299.5" stroke="#0c3892" stroke-width="14" fill="none"/>
<path d="M408.6 109.2L407.6 108.9L406.6 108.7L405.6 108.5L404.6 108.2L403.6 108.0L402.6 107.8L401.5 107.5L400.5 107.3L399.5 107.1L398.5 106.8L397.5 106.6L396.5 106.4L395.5 106.1L394.5 105.9L393.4 105.6L392.4 105.4L391.4 105.2L390.4 105.0L389.4 104.7L388.4 104.5L387.4 104.3L386.4 104.0L385.4 103.8L384.5 103.6L383.5 103.4L382.5 103.2L381.5 102.9L380.5 102.7L379.5 102.5L378.5 102.3L378.5 102.3" stroke="#ed8989" stroke-width="14" fill="none"/>
<path d="M378.5 102.3L377.5 102.0L376.5 101.8L375.6 101.6L374.6 101.3L373.6 101.1L372.6 100.9L371.6 100.6L370.6 100.4L369.6 100.2L368.6 99.9L367.6 99.7L366.5 99.5L365.5 99.3L364.5 99.1L363.4 98.9L362.3 98.7L361.2 98.5L360.1 98.4L359.0 98.2L357.9 98.1L356.8 97.9L355.8 97.8L354.7 97.7L353.6 97.6L352.5 97.5L351.4 97.4L350.3 97.4L349.2 97.3L348.1 97.2L348.1 97.2" stroke="#e15656" stroke-width="14" fill="none"/>
<path d="M348.1 97.2L346.9 97.2L345.8 97.1L344.7 97.1L343.6 97.0L342.5 97.0L341.4 96.9L340.4 96.9L339.3 96.9L338.3 96.8L337.3 96.8L336.3 96.8L335.3 96.7L334.4 96.7L333.5 96.7L332.7 96.6L331.9 96.6L331.1 96.6L330.4 96.5L328.8 96.4L327.4 96.4L326.2 96.4L325.2 96.4L324.4 96.4L323.8 96.4L323.2 96.4L322.7 96.4L322.0 96.3L321.2 96.2L320.1 96.0L318.7 95.8L318.7 95.8" stroke="#ff9595" stroke-width="14" fill="none"/>
<path d="M318.7 95.8L318.1 95.7L317.4 95.6L316.7 95.4L316.0 95.2L315.2 95.0L314.3 94.8L313.5 94.6L312.6 94.3L311.6 94.1L310.6 93.8L309.7 93.6L308.6 93.3L307.6 93.0L306.5 92.7L305.5 92.4L304.4 92.1L303.2 91.9L302.1 91.6L301.0 91.3L299.8 91.0L298.6 90.8L297.5 90.5L296.3 90.3L295.1 90.1L293.9 89.9L292.7 89.7L291.5 89.6L290.4 89.4L289.4 89.3L289.4 89.3" stroke="#da5454" stroke-width="14" fill="none"/>
<path d="M289.4 89.3L288.4 89.2L287.4 89.1L286.3 89.0L285.3 88.9L284.2 88.8L283.2 88.8L282.1 88.7L281.0 88.6L279.9 88.6L278.9 88.5L277.8 88.5L276.7 88.4L275.6 88.4L274.5 88.4L273.4 88.3L272.3 88.3L271.2 88.3L270.1 88.3L269.1 88.3L268.0 88.3L266.9 88.3L265.8 88.3L264.7 88.3L263.7 88.3L262.6 88.4L261.5 88.4L260.5 88.4L259.4 88.5L258.4 88.5L258.4 88.5" stroke="#fd9393" stroke-width="14" fill="none"/>
<path d="M258.4 88.5L257.3 88.6L256.2 88.6L255.1 88.7L254.0 88.8L252.9 88.9L251.8 88.9L250.8 89.0L249.7 89.2L248.6 89.3L247.5 89.4L246.4 89.5L245.4 89.6L244.3 89.8L243.3 89.9L242.2 90.0L241.1 90.2L240.1 90.3L239.1 90.5L238.0 90.6L237.0 90.8L236.0 91.0L235.0 91.1L234.0 91.3L233.0 91.4L232.0 91.6L231.1 91.8L230.1 91.9L229.2 92.1L228.2 92.2L227.3 92.4L227.3 92.4" stroke="#ee5b5b" stroke-width="14" fill="none"/>
<path d="M227.3 92.4L226.3 92.6L225.3 92.7L224.3 92.9L223.3 93.0L222.3 93.2L221.3 93.3L220.4 93.5L219.4 93.6L218.4 93.8L217.4 93.9L216.5 94.1L215.5 94.2L214.4 94.4L213.4 94.6L212.4 94.9L211.3 95.1L210.3 95.4L209.2 95.7L208.1 96.0L207.0 96.3L205.9 96.7L204.7 97.1L203.5 97.6L202.3 98.1L201.2 98.6L200.2 99.0L199.4 99.4L198.5 99.9L197.5 100.4L196.6 100.8L196.6 100.8" stroke="#f99191" stroke-width="14" fill="none"/>
<path d="M196.6 100.8L195.7 101.3L194.8 101.8L193.9 102.4L193.0 102.9L192.0 103.4L191.1 104.0L190.2 104.6L189.2 105.1L188.3 105.7L187.4 106.3L186.4 106.9L185.5 107.5L184.6 108.1L183.6 108.7L182.7 109.3L181.8 109.9L180.9 110.6L180.0 111.2L179.1 111.8L178.2 112.4L177.3 113.0L176.5 113.5L175.6 114.1L174.8 114.7L174.0 115.3L173.2 115.8L172.4 116.4L171.6 116.9L170.8 117.4L170.8 117.4" stroke="#ea5a5a" stroke-width="14" fill="none"/>
<path d="M170.8 117.4L170.1 117.9L169.1 118.5L168.2 119.1L167.3 119.8L166.4 120.4L165.5 120.9L164.7 121.5L163.8 122.1L163.0 122.7L162.1 123.2L161.3 123.8L160.5 124.4L159.6 125.0L158.8 125.5L158.0 126.1L157.2 126.7L156.4 127.3L155.6 127.9L154.8 128.5L154.0 129.2L153.1 129.8L152.3 130.5L151.5 131.2L150.7 131.9L149.8 132.6L149.0 133.3L148.1 134.1L147.3 134.8L146.6 135.5L145.9 136.1L145.9 136.1" stroke="#ff9696" stroke-width="14" fill="none"/>
<path d="M145.9 136.1L145.1 136.8L144.4 137.5L143.7 138.2L143.0 138.9L142.2 139.6L141.5 140.3L140.8 141.0L140.0 141.7L139.3 142.5L138.5 143.2L137.8 144.0L137.1 144.7L136.3 145.5L135.6 146.3L134.8 147.1L134.1 147.9L133.4 148.7L132.6 149.5L131.9 150.3L131.2 151.2L130.5 152.0L129.8 152.8L129.1 153.7L128.4 154.6L127.7 155.4L127.0 156.3L126.3 157.2L125.6 158.1L124.9 159.0L124.9 159.0" stroke="#e55858" stroke-width="14" fill="none"/>
<path d="M124.9 159.0L124.3 159.9L123.7 160.8L123.1 161.6L122.6 162.5L122.0 163.3L121.4 164.2L120.8 165.0L120.3 165.9L119.7 166.8L119.1 167.7L118.6 168.5L118.0 169.4L117.5 170.3L117.0 171.3L116.4 172.2L115.9 173.1L115.3 174.0L114.8 175.0L114.3 175.9L113.8 176.8L113.3 177.8L112.8 178.7L112.3 179.7L111.8 180.6L111.3 181.6L110.8 182.6L110.4 183.6L109.9 184.5L109.4 185.5L109.0 186.5L109.0 186.5" stroke="#ff9494" stroke-width="14" fill="none"/>
<path d="M109.0 186.5L108.6 187.5L108.1 188.5L107.7 189.4L107.3 190.4L106.9 191.4L106.5 192.4L106.1 193.4L105.7 194.4L105.4 195.4L105.0 196.3L104.7 197.3L104.3 198.3L104.0 199.3L103.7 200.3L103.4 201.2L103.1 202.2L102.8 203.2L102.5 204.2L102.2 205.2L101.9 206.2L101.6 207.2L101.4 208.2L101.1 209.2L100.8 210.2L100.6 211.2L100.3 212.3L100.1 213.3L99.9 214.3L99.6 215.3L99.4 216.3L99.4 216.3" stroke="#ee5b5b" stroke-width="14" fill="none"/>
<path d="M99.4 216.3L99.2 217.4L99.0 218.4L98.8 219.4L98.6 220.5L98.4 221.5L98.2 222.6L98.0 223.6L97.8 224.7L97.6 225.7L97.4 226.8L97.3 227.8L97.1 228.9L96.9 229.9L96.8 230.9L96.6 231.9L96.5 232.9L96.4 233.9L96.2 235.0L96.1 236.0L96.0 237.0L95.9 238.1L95.7 239.1L95.6 240.2L95.5 241.3L95.4 242.3L95.3 243.4L95.2 244.5L95.2 245.5L95.1 246.6L95.1 246.6" stroke="#f99191" stroke-width="14" fill="none"/>
<path d="M95.1 246.6L95.0 247.7L94.9 248.8L94.8 249.8L94.8 250.9L94.7 252.0L94.6 253.0L94.6 254.1L94.5 255.1L94.5 256.2L94.4 257.2L94.4 258.3L94.3 259.3L94.3 260.3L94.2 261.3L94.2 262.3L94.2 263.3L94.1 264.3L94.1 265.3L94.1 266.2L94.1 267.2L94.0 268.1L94.0 269.0L94.0 269.9L94.0 271.1L94.0 272.3L94.0 273.5L94.0 274.7L94.0 275.8L94.1 276.9L94.1 278.0L94.1 278.0" stroke="#ea5a5a" stroke-width="14" fill="none"/>
<path d="M94.1 278.0L94.2 279.1L94.2 280.2L94.3 281.2L94.4 282.2L94.5 283.3L94.5 284.3L94.6 285.3L94.7 286.3L94.8 287.2L94.9 288.2L95.0 289.2L95.1 290.1L95.2 291.1L95.3 292.0L95.4 292.9L95.5 293.9L95.6 294.8L95.6 295.8L95.7 296.7L95.8 297.6L95.9 298.6L95.9 299.5L96.0 300.5L96.0 300.5" stroke="#ff9898" stroke-width="14" fill="none"/>
<path d="M407.0 116.0L405.0 115.5L403.0 115.1L401.0 114.6L398.9 114.1L396.9 113.6L394.9 113.2L392.9 112.7L390.9 112.2L388.9 111.8L386.9 111.3L384.9 110.9L382.9 110.4L381.0 110.0L378.9 109.5L376.9 109.1L374.9 108.6L373.0 108.1L371.0 107.7L369.1 107.2L367.1 106.8L365.1 106.4L363.2 106.0L361.2 105.6L359.1 105.3L357.0 105.0L355.1 104.8L353.0 104.6L350.9 104.4L348.8 104.3L346.6 104.2L344.4 104.1L342.2 104.0L340.1 103.9L338.0 103.8L336.0 103.8L334.2 103.7L332.4 103.6L330.8 103.5L328.5 103.4L326.2 103.4L324.5 103.4L323.0 103.4L321.3 103.3L319.0 103.0L316.8 102.6L315.2 102.2L313.5 101.8L311.7 101.3L309.8 100.8L307.8 100.3L305.8 99.8L303.7 99.2L301.6 98.6L299.4 98.1L297.2 97.6L295.0 97.2L292.8 96.8L290.6 96.5L288.7 96.3L286.7 96.1L284.7 95.9L282.7 95.8L280.6 95.6L278.5 95.5L276.4 95.4L274.3 95.4L272.2 95.3L270.1 95.3L268.0 95.3L265.9 95.3L263.8 95.3L261.7 95.4L259.7 95.5L257.7 95.6L255.6 95.7L253.5 95.8L251.4 96.0L249.3 96.2L247.3 96.5L245.2 96.7L243.1 97.0L241.1 97.3L239.1 97.6L237.1 97.9L235.1 98.2L233.2 98.5L231.3 98.8L229.4 99.1L227.4 99.5L225.3 99.8L223.3 100.1L221.4 100.4L219.5 100.7L217.6 101.0L215.8 101.3L213.9 101.7L212.0 102.1L210.1 102.7L208.2 103.3L206.1 104.1L204.0 105.0L202.4 105.7L200.8 106.6L199.1 107.5L197.4 108.4L195.6 109.5L193.8 110.5L192.0 111.7L190.2 112.8L188.4 114.0L186.6 115.2L184.8 116.4L183.0 117.6L181.3 118.7L179.6 119.9L177.9 121.0L176.3 122.1L174.8 123.2L173.0 124.3L171.2 125.6L169.4 126.8L167.7 127.9L166.1 129.0L164.5 130.1L162.9 131.2L161.3 132.4L159.8 133.5L158.3 134.7L156.7 135.9L155.2 137.2L153.6 138.6L152.0 140.0L150.6 141.3L149.2 142.6L147.8 143.9L146.4 145.3L145.0 146.7L143.5 148.1L142.1 149.6L140.7 151.1L139.3 152.6L137.9 154.1L136.5 155.7L135.1 157.3L133.8 159.0L132.5 160.6L131.2 162.3L130.0 164.0L128.9 165.6L127.8 167.2L126.7 168.9L125.6 170.5L124.5 172.2L123.5 174.0L122.5 175.7L121.4 177.5L120.4 179.3L119.5 181.1L118.5 182.9L117.6 184.7L116.7 186.6L115.8 188.4L115.0 190.3L114.2 192.2L113.4 194.1L112.6 195.9L112.0 197.8L111.3 199.6L110.7 201.5L110.0 203.4L109.5 205.2L108.9 207.1L108.4 209.0L107.9 211.0L107.4 212.9L106.9 214.9L106.5 216.8L106.0 218.8L105.6 220.8L105.2 222.8L104.9 224.8L104.5 226.9L104.2 229.0L103.9 230.9L103.6 232.9L103.3 234.8L103.1 236.8L102.8 238.9L102.6 240.9L102.4 243.0L102.2 245.1L102.0 247.2L101.9 249.3L101.7 251.4L101.6 253.4L101.5 255.5L101.4 257.6L101.3 259.6L101.2 261.6L101.2 263.5L101.1 265.4L101.0 267.3L101.0 269.1L101.0 271.2L101.0 273.4L101.0 275.6L101.1 277.7L101.2 279.7L101.4 281.7L101.5 283.7L101.7 285.6L101.9 287.5L102.1 289.4L102.2 291.3L102.4 293.2L102.6 295.1L102.8 297.0L102.9 299.0L103.0 300.0" stroke="#00ee00" stroke-width="2" fill="none"/>
<g fill="none" stroke="#111" stroke-width="1.1" stroke-dasharray="13 6"><circle cx="401.8" cy="111.2" r="3"/><circle cx="377.7" cy="105.7" r="3"/><circle cx="354.4" cy="101.2" r="3"/><circle cx="330.2" cy="100.0" r="3"/><circle cx="306.7" cy="96.4" r="3"/><circle cx="282.9" cy="92.3" r="3"/><circle cx="258.5" cy="92.0" r="3"/><circle cx="234.6" cy="94.7" r="3"/><circle cx="210.1" cy="99.0" r="3"/><circle cx="187.4" cy="110.5" r="3"/><circle cx="167.5" cy="123.9" r="3"/><circle cx="148.2" cy="138.7" r="3"/><circle cx="131.8" cy="155.9" r="3"/><circle cx="117.9" cy="176.7" r="3"/><circle cx="107.7" cy="199.4" r="3"/><circle cx="101.6" cy="223.2" r="3"/><circle cx="98.6" cy="246.9" r="3"/><circle cx="97.5" cy="271.1" r="3"/><circle cx="99.1" cy="295.4" r="3"/></g>
<path d="M313.7 109.6L315.6 110.3L317.6 111.1L319.5 111.9L321.5 112.6L323.4 113.3L325.3 114.1L327.2 114.8L329.1 115.5L331.0 116.3L332.8 117.0L334.7 117.8L336.5 118.5L338.3 119.3L340.0 120.1L341.7 120.9L343.4 121.7L345.1 122.6L346.9 123.5L348.6 124.4L350.3 125.4L352.0 126.4L353.6 127.4L355.3 128.4L356.9 129.4L358.6 130.4L360.2 131.5L361.8 132.6L363.4 133.7L364.9 134.8L366.5 135.9L368.0 137.0L369.6 138.2L371.1 139.4L372.7 140.6L374.3 141.8L375.8 143.1L377.3 144.3L378.9 145.6L380.3 146.9L381.8 148.1L383.2 149.5L384.7 150.8L386.1 152.1L387.5 153.5L388.8 154.9L390.2 156.4L391.5 157.9L392.8 159.4L394.0 160.8L395.2 162.2L396.3 163.7L397.4 165.2L398.5 166.7L399.6 168.2L400.7 169.8L401.8 171.4L402.9 173.1L404.0 174.7L405.0 176.4L406.1 178.2L407.2 180.0L408.3 181.8L409.4 183.6L410.5 185.5L411.6 187.5L412.5 189.0L413.4 190.7L414.3 192.4L415.3 194.1L416.2 195.9L417.2 197.7L418.1 199.5L419.1 201.4L420.1 203.3L421.0 205.2L422.0 207.1L422.9 209.0L423.8 210.9L424.7 212.7L425.6 214.5L426.5 216.3L427.3 218.1L428.1 219.8L428.8 221.5L429.5 223.1L430.2 224.6L431.0 226.5L431.9 228.7L432.7 230.7L433.4 232.5L434.1 234.2L434.7 235.8L435.2 237.4L435.7 239.0L436.1 240.5L436.5 242.2L436.9 243.9L437.3 245.8L437.7 247.8L438.1 250.0L438.3 251.6L438.6 253.4L438.8 255.2L439.1 257.0L439.3 258.9L439.5 260.9L439.7 262.9L439.9 264.9L440.0 266.9L440.2 269.0L440.3 271.1L440.4 273.2L440.5 275.3L440.6 277.4L440.7 279.5L440.7 281.6L440.8 283.7L440.8 285.7L440.8 287.7L440.8 289.7L440.8 291.7L440.7 293.8L440.7 295.8L440.6 297.8L440.6 299.9L440.5 301.9L440.4 303.9L440.3 306.0L440.1 308.0L440.0 310.0L439.8 312.0L439.6 314.0L439.4 315.9L439.2 317.9L439.0 319.8L438.7 321.7L438.4 323.5L438.1 325.4L437.7 327.3L437.3 329.3L436.9 331.3L436.5 333.2L436.0 335.1L435.6 337.0L435.0 338.9L434.5 340.8L434.0 342.7L433.4 344.5L432.8 346.3L432.2 348.1L431.6 349.9L430.9 351.7L430.3 353.4L429.6 355.1L428.9 356.8L428.1 358.5L427.3 360.3L426.4 362.0L425.5 363.7L424.6 365.3L423.7 366.9L422.7 368.6L421.7 370.2L420.6 371.8L419.5 373.4L418.4 375.0L417.3 376.7L416.1 378.4L414.9 380.1L413.7 381.8L412.5 383.6L411.4 385.2L410.2 386.8L409.1 388.5L407.9 390.2L406.7 391.9L405.4 393.6L404.2 395.3L403.0 397.0L401.7 398.7L400.4 400.3L399.2 402.0L397.9 403.6L396.7 405.1L395.5 406.6L394.2 408.0L393.0 409.4L391.9 410.6L390.5 412.0L389.1 413.4L387.6 414.8L386.1 416.1L384.6 417.3L383.1 418.5L381.7 419.6L380.1 420.7L378.6 421.7L377.1 422.8L375.5 423.8L373.9 424.8L372.3 425.9L370.6 426.9L369.0 427.9L367.2 428.9L365.5 429.9L363.6 430.8L361.8 431.8L359.9 432.7L358.0 433.6L356.2 434.5L354.3 435.4L352.6 436.2L350.8 437.0L349.1 437.9L347.5 438.7L345.1 440.0L343.1 441.2L341.5 442.3L340.1 443.2L338.9 443.9L337.7 444.5L336.3 445.1L334.3 445.7L332.9 446.1L331.3 446.5L329.5 446.9L327.7 447.3L325.7 447.6L323.7 448.0L321.7 448.3L319.6 448.6L317.5 448.8L315.5 449.0L313.4 449.2L311.4 449.3L309.5 449.4L307.6 449.5L305.7 449.5L303.8 449.5L302.0 449.5L300.2 449.4L298.4 449.3L296.6 449.2L294.8 449.0L292.9 448.7L291.0 448.4L289.0 448.1L287.0 447.7L284.8 447.2L283.2 446.8L281.5 446.3L279.7 445.8L277.9 445.2L275.9 444.6L274.0 443.9L272.0 443.2L270.0 442.5L268.0 441.8L266.0 441.1L264.0 440.3L262.1 439.5L260.2 438.8L258.3 438.0L256.6 437.3L254.9 436.5L253.3 435.8L251.9 435.2L249.8 434.2L248.0 433.2L246.3 432.2L244.8 431.2L243.3 430.2L241.9 429.2L240.5 428.1L239.0 427.0L237.5 425.9L235.9 424.8L234.2 423.6L233.3 423.0" stroke="url(#bandg)" stroke-width="12" fill="none"/>
<path d="M318.5 98.0L319.4 98.4L320.3 98.7L321.2 99.1L322.2 99.5L323.1 99.8L324.0 100.2L325.0 100.6L325.9 100.9L326.9 101.3L327.8 101.7L328.8 102.0L329.8 102.4L330.7 102.8L331.7 103.1L332.7 103.5L333.6 103.9L334.6 104.3L335.6 104.6L336.5 105.0L337.5 105.4L338.5 105.8L339.4 106.2L340.4 106.6L341.4 107.0L342.3 107.4L343.3 107.8L344.3 108.3L345.2 108.7L346.2 109.2L347.1 109.6L347.1 109.6" stroke="#e58585" stroke-width="13" fill="none"/>
<path d="M347.1 109.6L348.1 110.1L349.0 110.5L350.0 111.0L350.9 111.5L351.9 112.0L352.8 112.5L353.7 113.0L354.6 113.5L355.5 114.0L356.5 114.5L357.4 115.1L358.3 115.6L359.2 116.1L360.1 116.6L361.0 117.2L361.8 117.7L362.7 118.3L363.6 118.8L364.5 119.4L365.3 119.9L366.2 120.5L367.1 121.1L367.9 121.6L368.8 122.2L369.6 122.8L370.5 123.4L371.3 124.0L372.2 124.6L373.0 125.2L373.8 125.8L373.8 125.8" stroke="#cf4f4f" stroke-width="13" fill="none"/>
<path d="M373.8 125.8L374.7 126.4L375.5 127.0L376.3 127.6L377.1 128.2L378.0 128.8L378.8 129.5L379.6 130.1L380.4 130.8L381.3 131.4L382.1 132.1L382.9 132.7L383.7 133.4L384.5 134.0L385.3 134.7L386.1 135.4L386.9 136.0L387.7 136.7L388.5 137.4L389.3 138.1L390.1 138.8L390.9 139.5L391.7 140.3L392.5 141.0L393.3 141.7L394.0 142.5L394.8 143.2L395.6 144.0L396.4 144.7L397.1 145.5L397.1 145.5" stroke="#df8181" stroke-width="13" fill="none"/>
<path d="M397.1 145.5L397.9 146.3L398.6 147.1L399.4 147.9L400.1 148.8L400.9 149.6L401.6 150.4L402.4 151.3L403.0 152.1L403.7 152.9L404.3 153.7L405.0 154.5L405.6 155.3L406.2 156.1L406.8 156.9L407.5 157.7L408.1 158.6L408.7 159.4L409.3 160.2L409.9 161.1L410.5 161.9L411.0 162.8L411.6 163.6L412.2 164.5L412.8 165.4L413.4 166.2L413.9 167.1L414.5 168.0L415.1 168.9L415.6 169.8L416.2 170.7L416.2 170.7" stroke="#bd4848" stroke-width="13" fill="none"/>
<path d="M416.2 170.7L416.8 171.7L417.3 172.6L417.9 173.5L418.5 174.5L419.0 175.4L419.6 176.4L420.2 177.3L420.7 178.3L421.3 179.3L421.9 180.3L422.4 181.3L422.9 182.1L423.4 182.9L423.8 183.8L424.3 184.6L424.8 185.5L425.3 186.4L425.8 187.3L426.3 188.2L426.8 189.1L427.2 190.0L427.7 190.9L428.2 191.9L428.7 192.8L429.2 193.8L429.7 194.7L430.2 195.7L430.7 196.7L431.2 197.6L431.2 197.6" stroke="#ce7777" stroke-width="13" fill="none"/>
<path d="M431.2 197.6L431.7 198.6L432.2 199.6L432.7 200.6L433.2 201.5L433.7 202.5L434.1 203.5L434.6 204.4L435.1 205.4L435.5 206.4L436.0 207.3L436.5 208.3L436.9 209.2L437.3 210.1L437.8 211.1L438.2 212.0L438.6 212.9L439.0 213.8L439.4 214.7L439.8 215.5L440.2 216.4L440.6 217.2L441.0 218.1L441.3 218.9L441.7 219.7L442.0 220.5L442.5 221.7L443.0 222.8L443.4 223.9L443.9 224.9L443.9 224.9" stroke="#bf4949" stroke-width="13" fill="none"/>
<path d="M443.9 224.9L444.3 226.0L444.7 227.0L445.1 228.0L445.4 228.9L445.8 229.9L446.1 230.8L446.5 231.7L446.8 232.6L447.1 233.6L447.4 234.5L447.6 235.4L447.9 236.3L448.2 237.3L448.4 238.2L448.7 239.2L448.9 240.2L449.1 241.2L449.4 242.3L449.6 243.3L449.8 244.4L450.0 245.5L450.2 246.7L450.4 247.9L450.6 248.8L450.7 249.8L450.8 250.7L451.0 251.6L451.1 252.6L451.2 253.6L451.4 254.6L451.5 255.5L451.5 255.5" stroke="#c47272" stroke-width="13" fill="none"/>
<path d="M451.5 255.5L451.6 256.6L451.7 257.6L451.8 258.6L451.9 259.6L452.0 260.7L452.1 261.7L452.2 262.8L452.3 263.9L452.4 264.9L452.5 266.0L452.6 267.1L452.6 268.2L452.7 269.3L452.8 270.4L452.8 271.5L452.9 272.6L452.9 273.7L453.0 274.8L453.0 275.9L453.1 276.9L453.1 278.0L453.2 279.1L453.2 280.2L453.2 281.3L453.2 282.4L453.3 283.5L453.3 284.5L453.3 285.6L453.3 286.7L453.3 286.7" stroke="#b64646" stroke-width="13" fill="none"/>
<path d="M453.3 286.7L453.3 287.7L453.3 288.7L453.3 289.8L453.3 290.8L453.3 291.9L453.3 292.9L453.2 294.0L453.2 295.0L453.2 296.1L453.2 297.2L453.1 298.2L453.1 299.3L453.1 300.3L453.0 301.4L453.0 302.5L452.9 303.5L452.9 304.6L452.8 305.7L452.8 306.7L452.7 307.8L452.6 308.9L452.5 309.9L452.5 311.0L452.4 312.0L452.3 313.1L452.2 314.2L452.1 315.2L452.0 316.3L451.9 317.3L451.9 317.3" stroke="#cc7676" stroke-width="13" fill="none"/>
<path d="M451.9 317.3L451.7 318.3L451.6 319.4L451.5 320.4L451.3 321.4L451.2 322.5L451.1 323.5L450.9 324.5L450.7 325.5L450.6 326.5L450.4 327.5L450.2 328.6L450.0 329.7L449.8 330.7L449.6 331.8L449.4 332.9L449.1 333.9L448.9 335.0L448.7 336.0L448.4 337.1L448.2 338.1L447.9 339.1L447.7 340.2L447.4 341.2L447.1 342.2L446.8 343.3L446.5 344.3L446.2 345.3L445.9 346.3L445.6 347.3L445.3 348.3L445.3 348.3" stroke="#b84747" stroke-width="13" fill="none"/>
<path d="M445.3 348.3L445.0 349.3L444.7 350.3L444.4 351.3L444.0 352.2L443.7 353.2L443.3 354.2L443.0 355.1L442.6 356.1L442.3 357.0L441.9 358.0L441.5 358.9L441.1 359.9L440.7 360.8L440.3 361.7L439.9 362.6L439.5 363.7L439.0 364.7L438.5 365.7L438.0 366.7L437.5 367.7L437.0 368.7L436.5 369.6L436.0 370.6L435.5 371.5L434.9 372.4L434.4 373.3L433.8 374.2L433.3 375.1L432.7 376.0L432.2 376.9L432.2 376.9" stroke="#d67c7c" stroke-width="13" fill="none"/>
<path d="M432.2 376.9L431.6 377.8L431.0 378.7L430.5 379.5L429.9 380.4L429.3 381.2L428.7 382.1L428.1 382.9L427.6 383.8L427.0 384.7L426.4 385.5L425.8 386.4L425.2 387.2L424.6 388.1L424.0 389.0L423.4 389.8L422.7 390.7L422.2 391.5L421.6 392.3L421.1 393.1L420.5 394.0L419.9 394.8L419.3 395.7L418.7 396.5L418.1 397.4L417.5 398.3L416.8 399.1L416.2 400.0L415.6 400.9L415.0 401.8L415.0 401.8" stroke="#d15050" stroke-width="13" fill="none"/>
<path d="M415.0 401.8L414.3 402.7L413.7 403.5L413.0 404.4L412.4 405.3L411.7 406.2L411.0 407.1L410.4 407.9L409.7 408.8L409.0 409.7L408.4 410.5L407.7 411.4L407.0 412.2L406.4 413.0L405.7 413.8L405.0 414.6L404.3 415.4L403.7 416.2L403.0 417.0L402.3 417.7L401.6 418.5L400.9 419.2L400.3 419.9L399.4 420.8L398.5 421.7L397.7 422.5L396.8 423.3L395.9 424.1L395.1 424.9L394.2 425.6L394.2 425.6" stroke="#e08282" stroke-width="13" fill="none"/>
<path d="M394.2 425.6L393.3 426.3L392.5 427.0L391.6 427.7L390.8 428.4L389.9 429.0L389.1 429.7L388.2 430.3L387.4 430.9L386.5 431.5L385.7 432.1L384.8 432.6L384.0 433.2L383.1 433.8L382.3 434.3L381.5 434.8L380.6 435.4L379.8 435.9L378.9 436.4L378.1 437.0L377.2 437.5L376.3 438.1L375.3 438.7L374.4 439.3L373.4 439.8L372.4 440.4L371.4 440.9L370.4 441.4L369.4 442.0L368.4 442.5L368.4 442.5" stroke="#e15656" stroke-width="13" fill="none"/>
<path d="M368.4 442.5L367.4 443.0L366.4 443.5L365.4 443.9L364.4 444.4L363.4 444.9L362.5 445.3L361.5 445.8L360.6 446.2L359.7 446.7L358.8 447.1L357.9 447.5L357.1 447.9L356.3 448.3L355.5 448.7L354.7 449.1L354.0 449.4L353.3 449.8L352.3 450.3L351.4 450.8L350.6 451.3L349.9 451.8L349.1 452.2L348.4 452.7L347.6 453.2L346.8 453.8L345.9 454.3L345.0 454.8L344.0 455.4L342.9 455.9L341.8 456.4L340.5 456.9L340.5 456.9" stroke="#ff9595" stroke-width="13" fill="none"/>
<path d="M340.5 456.9L339.2 457.3L337.8 457.7L336.9 458.0L336.0 458.2L335.0 458.5L334.1 458.7L333.1 458.9L332.1 459.1L331.1 459.3L330.0 459.6L329.0 459.8L327.9 459.9L326.8 460.1L325.7 460.3L324.6 460.5L323.5 460.7L322.3 460.8L321.2 461.0L320.0 461.1L318.9 461.2L317.8 461.4L316.6 461.5L315.5 461.6L314.3 461.7L313.2 461.7L312.1 461.8L311.0 461.9L309.9 461.9L308.9 461.9L308.9 461.9" stroke="#f35d5d" stroke-width="13" fill="none"/>
<path d="M308.9 461.9L307.8 461.9L306.8 462.0L305.8 462.0L304.8 462.0L303.8 462.0L302.7 462.0L301.7 462.0L300.7 461.9L299.7 461.9L298.6 461.8L297.6 461.8L296.5 461.7L295.5 461.6L294.4 461.5L293.3 461.4L292.3 461.3L291.2 461.1L290.1 461.0L288.9 460.8L287.8 460.6L286.6 460.4L285.5 460.1L284.3 459.9L283.1 459.6L281.9 459.3L280.9 459.1L280.0 458.8L279.1 458.6L278.1 458.3L278.1 458.3" stroke="#ffa2a2" stroke-width="13" fill="none"/>
<path d="M278.1 458.3L277.1 458.0L276.1 457.7L275.1 457.4L274.1 457.1L273.1 456.8L272.1 456.5L271.0 456.1L270.0 455.8L268.9 455.4L267.9 455.1L266.8 454.7L265.8 454.3L264.7 453.9L263.7 453.5L262.6 453.1L261.6 452.8L260.5 452.4L259.5 452.0L258.5 451.6L257.5 451.2L256.5 450.8L255.5 450.4L254.5 450.0L253.5 449.6L252.6 449.2L251.7 448.8L250.8 448.4L249.9 448.0L249.0 447.6L249.0 447.6" stroke="#ff6464" stroke-width="13" fill="none"/>
<path d="M249.0 447.6L248.2 447.2L247.3 446.9L246.5 446.5L245.3 445.9L244.1 445.3L243.0 444.7L241.9 444.1L240.8 443.5L239.8 442.9L238.8 442.3L237.9 441.7L237.0 441.1L236.2 440.5L235.3 439.9L234.5 439.3L233.7 438.7L233.0 438.1L232.2 437.6L231.5 437.0L230.8 436.5L230.1 436.0L229.4 435.5L228.6 434.9L227.9 434.4L227.2 433.9L226.4 433.4L226.4 433.4" stroke="#ff9d9d" stroke-width="13" fill="none"/>
<path d="M316.0 104.0L317.9 104.8L319.8 105.5L321.7 106.3L323.6 107.0L325.5 107.7L327.4 108.5L329.4 109.2L331.3 109.9L333.2 110.7L335.1 111.4L337.0 112.2L338.8 113.0L340.7 113.8L342.5 114.6L344.3 115.5L346.1 116.3L347.9 117.3L349.7 118.2L351.5 119.2L353.2 120.2L355.0 121.2L356.7 122.2L358.4 123.3L360.1 124.3L361.8 125.4L363.5 126.5L365.1 127.6L366.8 128.7L368.4 129.9L370.0 131.0L371.6 132.2L373.2 133.4L374.8 134.6L376.4 135.9L378.0 137.1L379.6 138.4L381.2 139.7L382.7 141.0L384.3 142.3L385.8 143.7L387.3 145.0L388.8 146.4L390.3 147.9L391.7 149.3L393.2 150.8L394.6 152.3L396.0 153.9L397.4 155.5L398.6 157.0L399.9 158.5L401.1 160.0L402.2 161.6L403.4 163.2L404.6 164.8L405.7 166.4L406.8 168.1L407.9 169.8L409.0 171.5L410.1 173.3L411.2 175.0L412.3 176.9L413.4 178.7L414.6 180.6L415.7 182.5L416.8 184.5L417.7 186.1L418.6 187.8L419.6 189.5L420.5 191.3L421.5 193.1L422.5 194.9L423.5 196.8L424.4 198.7L425.4 200.6L426.4 202.5L427.4 204.4L428.3 206.3L429.2 208.2L430.1 210.1L431.0 212.0L431.9 213.8L432.7 215.6L433.5 217.3L434.3 219.0L435.0 220.7L435.7 222.2L436.5 224.2L437.4 226.4L438.2 228.4L439.0 230.3L439.7 232.1L440.3 233.9L440.9 235.6L441.4 237.3L441.9 239.0L442.4 240.8L442.8 242.6L443.2 244.6L443.6 246.7L444.0 249.0L444.3 250.7L444.5 252.5L444.8 254.4L445.0 256.3L445.3 258.3L445.5 260.3L445.7 262.3L445.8 264.4L446.0 266.5L446.1 268.6L446.3 270.8L446.4 272.9L446.5 275.0L446.6 277.2L446.7 279.3L446.7 281.5L446.8 283.6L446.8 285.6L446.8 287.7L446.8 289.7L446.8 291.8L446.7 293.9L446.7 295.9L446.6 298.0L446.6 300.1L446.5 302.2L446.4 304.3L446.3 306.3L446.1 308.4L446.0 310.5L445.8 312.5L445.6 314.6L445.4 316.6L445.2 318.6L444.9 320.6L444.6 322.5L444.3 324.5L444.0 326.4L443.6 328.5L443.2 330.5L442.8 332.5L442.3 334.6L441.9 336.6L441.4 338.6L440.8 340.5L440.3 342.5L439.7 344.4L439.1 346.3L438.5 348.2L437.9 350.1L437.2 352.0L436.5 353.8L435.8 355.6L435.1 357.4L434.4 359.1L433.6 361.0L432.7 362.9L431.8 364.7L430.8 366.5L429.8 368.3L428.8 370.0L427.8 371.7L426.7 373.4L425.6 375.1L424.5 376.7L423.4 378.4L422.2 380.1L421.0 381.8L419.8 383.5L418.6 385.2L417.4 387.0L416.3 388.6L415.1 390.3L414.0 391.9L412.8 393.6L411.6 395.4L410.3 397.1L409.1 398.8L407.8 400.6L406.5 402.3L405.2 404.0L403.9 405.7L402.6 407.3L401.3 408.9L400.0 410.5L398.8 411.9L397.5 413.4L396.2 414.7L394.8 416.2L393.2 417.8L391.6 419.3L390.0 420.7L388.4 422.0L386.8 423.2L385.2 424.4L383.6 425.6L382.0 426.7L380.4 427.8L378.8 428.8L377.1 429.9L375.5 430.9L373.8 432.0L372.0 433.1L370.2 434.1L368.3 435.2L366.4 436.2L364.5 437.2L362.5 438.1L360.6 439.0L358.7 439.9L356.9 440.8L355.1 441.6L353.4 442.4L351.8 443.2L350.3 444.0L348.2 445.2L346.4 446.3L344.8 447.3L343.3 448.3L341.8 449.1L340.2 450.0L338.3 450.8L336.0 451.5L334.4 451.9L332.6 452.4L330.8 452.8L328.8 453.2L326.8 453.5L324.7 453.9L322.5 454.2L320.4 454.5L318.2 454.8L316.0 455.0L313.9 455.2L311.8 455.3L309.7 455.4L307.7 455.4L305.7 455.5L303.8 455.5L301.9 455.5L299.9 455.4L298.0 455.3L296.1 455.1L294.1 454.9L292.1 454.7L290.0 454.4L287.9 454.0L285.7 453.5L283.4 453.0L281.7 452.6L279.9 452.1L278.0 451.5L276.1 450.9L274.1 450.3L272.1 449.6L270.0 448.9L268.0 448.2L265.9 447.4L263.9 446.7L261.8 445.9L259.9 445.1L257.9 444.3L256.0 443.6L254.2 442.8L252.5 442.0L250.8 441.3L249.3 440.6L247.1 439.5L245.1 438.4L243.2 437.3L241.5 436.2L239.9 435.1L238.3 434.0L236.9 432.9L235.4 431.8L233.9 430.7L232.4 429.6L230.8 428.5L230.0 428.0" stroke="#00ee00" stroke-width="2" fill="none"/>
<g fill="none" stroke="#111" stroke-width="1.1" stroke-dasharray="13 6"><circle cx="323.0" cy="103.0" r="3"/><circle cx="345.8" cy="112.3" r="3"/><circle cx="367.1" cy="124.7" r="3"/><circle cx="386.6" cy="139.7" r="3"/><circle cx="403.2" cy="157.1" r="3"/><circle cx="417.0" cy="177.9" r="3"/><circle cx="428.5" cy="199.0" r="3"/><circle cx="438.9" cy="220.9" r="3"/><circle cx="446.6" cy="243.9" r="3"/><circle cx="449.6" cy="268.4" r="3"/><circle cx="450.3" cy="292.9" r="3"/><circle cx="448.9" cy="317.0" r="3"/><circle cx="444.2" cy="341.4" r="3"/><circle cx="435.8" cy="364.4" r="3"/><circle cx="422.7" cy="385.5" r="3"/><circle cx="409.3" cy="404.4" r="3"/><circle cx="392.3" cy="423.3" r="3"/><circle cx="371.9" cy="437.2" r="3"/><circle cx="350.9" cy="447.7" r="3"/><circle cx="327.4" cy="457.0" r="3"/><circle cx="302.8" cy="459.0" r="3"/><circle cx="278.9" cy="455.4" r="3"/><circle cx="255.6" cy="447.2" r="3"/><circle cx="234.0" cy="435.2" r="3"/></g>
<path d="M108.2 269.5L108.4 271.6L108.5 273.6L108.6 275.5L108.7 277.4L108.7 279.3L108.8 281.2L108.9 283.1L109.0 285.0L109.1 286.9L109.2 288.8L109.4 290.7L109.5 292.7L109.7 294.8L109.9 296.9L110.2 299.1L110.4 300.9L110.6 302.7L110.9 304.6L111.1 306.5L111.4 308.5L111.7 310.5L111.9 312.5L112.2 314.6L112.5 316.6L112.9 318.7L113.2 320.8L113.5 322.8L113.9 324.8L114.3 326.9L114.6 328.8L115.0 330.8L115.5 332.7L115.9 334.6L116.3 336.4L116.8 338.1L117.4 340.1L117.9 342.1L118.5 344.1L119.1 346.0L119.8 348.0L120.4 349.9L121.1 351.7L121.8 353.6L122.5 355.4L123.2 357.2L124.0 359.0L124.7 360.7L125.5 362.3L126.3 364.0L127.1 365.5L127.9 367.1L128.8 368.5L129.7 370.1L130.8 371.8L131.8 373.3L132.9 374.8L134.0 376.2L135.1 377.6L136.3 378.9L137.5 380.2L138.7 381.5L140.0 382.8L141.4 384.1L142.8 385.4L144.3 386.7L145.9 388.0L147.5 389.4L148.9 390.5L150.3 391.6L151.8 392.8L153.3 393.9L154.9 395.1L156.5 396.2L158.2 397.4L159.9 398.5L161.6 399.6L163.3 400.7L165.0 401.8L166.8 402.9L168.5 403.9L170.2 404.9L171.9 405.8L173.6 406.7L175.2 407.6L176.9 408.4L178.7 409.2L180.5 410.0L182.2 410.8L184.0 411.5L185.7 412.2L187.5 412.9L189.3 413.5L191.0 414.1L192.8 414.6L194.6 415.1L196.4 415.6L198.2 416.1L200.0 416.5L201.9 416.9L203.8 417.3L205.8 417.7L207.6 418.0L209.4 418.3L211.3 418.5L213.3 418.8L215.2 419.0L217.2 419.2L219.2 419.4L221.2 419.5L223.2 419.6L225.1 419.7L227.1 419.8L229.1 419.8L231.0 419.8L233.0 419.8L234.8 419.8L236.7 419.7L238.5 419.5L240.3 419.4L242.3 419.2L244.2 418.9L246.2 418.5L248.1 418.2L250.0 417.7L252.0 417.3L253.9 416.8L255.8 416.3L257.7 415.7L259.6 415.1L261.5 414.6L263.3 414.0L265.1 413.4L266.9 412.8L268.6 412.2L270.7 411.4L272.7 410.7L274.6 410.0L276.5 409.3L278.2 408.5L279.9 407.8L281.6 407.0L283.1 406.2L284.7 405.4L286.2 404.5L287.6 403.6L289.0 402.7L290.4 401.7L291.7 400.6L293.0 399.4L294.3 398.2L295.6 396.8L296.9 395.4L298.2 394.0L299.5 392.5L300.7 391.0L301.9 389.5L303.0 388.0L304.1 386.6L305.2 385.2L306.4 383.5L307.4 382.0L308.3 380.7L309.1 379.4L309.9 378.0L310.6 376.6L311.4 374.9L312.3 373.0L313.3 370.8L314.2 368.9L314.8 367.4L315.5 365.7L316.2 364.0L316.9 362.1L317.7 360.1L318.4 358.1L319.2 356.0L320.0 353.9L320.8 351.8L321.5 349.7L322.3 347.6L323.1 345.6L323.8 343.6L324.6 341.7L325.3 339.8L326.0 338.1L326.8 336.0L327.9 333.6L328.8 331.4L329.8 329.4L330.7 327.5L331.5 325.8L332.3 324.1L333.1 322.5L333.8 320.9L334.5 319.2L335.2 317.4L335.9 315.6L336.6 313.8L337.2 311.9L337.9 310.1L338.5 308.2L339.1 306.4L339.7 304.5L340.3 302.6L340.8 300.7L341.3 298.8L341.7 296.9L342.1 295.0L342.4 293.2L342.8 291.3L343.1 289.3L343.4 287.4L343.6 285.4L343.9 283.4L344.1 281.4L344.3 279.4L344.4 277.4L344.6 275.5L344.7 273.6L344.8 271.7L344.8 269.6L344.9 267.6L345.0 265.7L345.1 263.9L345.1 262.1L345.1 260.4L345.0 258.7L344.9 257.0L344.7 255.2L344.4 253.4L344.1 251.5L343.7 249.7L343.4 248.0L343.0 246.3L342.5 244.6L342.1 242.9L341.6 241.2L341.1 239.4L340.5 237.7L339.9 235.9L339.2 234.0L338.5 232.2L337.8 230.3L336.9 228.3L336.0 226.3L335.0 224.3L334.2 222.5L333.4 221.0L332.5 219.5L331.6 217.8L330.7 216.1L329.7 214.4L328.7 212.7L327.6 210.9L326.6 209.1L325.5 207.2L324.3 205.4L323.2 203.6L322.0 201.8L320.9 200.0L319.8 198.3L318.6 196.5L317.5 194.9L316.4 193.2L315.3 191.7L314.2 190.2L313.2 188.8L312.2 187.4L311.0 185.8L309.6 184.1L308.2 182.4L306.8 180.9L305.5 179.4L304.2 178.1L302.8 176.8L301.5 175.6L300.2 174.3L298.8 173.1L297.4 171.9L296.0 170.7L294.5 169.4L293.0 168.1L291.4 166.8L289.9 165.4L288.4 164.1L286.9 162.8L285.4 161.5L283.9 160.3L282.4 159.1L280.9 157.9L279.5 156.8L278.0 155.7L276.5 154.7L275.0 153.7L273.5 152.7L271.9 151.8L270.3 150.9L268.6 150.0L266.9 149.1L265.3 148.3L263.6 147.5L261.8 146.8L260.1 146.1L258.4 145.4L256.6 144.8L254.8 144.2L253.1 143.6L251.2 143.1L249.4 142.7L247.7 142.3L245.9 142.0L244.2 141.7L242.4 141.5L240.6 141.3L238.7 141.1L236.9 140.9L235.0 140.8L233.1 140.7L231.1 140.7L229.2 140.7L227.3 140.7L225.3 140.7L223.3 140.8L221.4 140.9L219.5 141.0L217.6 141.1L215.6 141.3L213.7 141.5L211.7 141.7L209.8 141.9L207.8 142.2L205.8 142.5L203.9 142.8L202.0 143.2L200.1 143.6L198.2 144.0L196.4 144.4L194.6 144.9L192.9 145.4L191.3 145.9L189.5 146.5L187.7 147.1L186.0 147.8L184.4 148.6L182.7 149.3L181.1 150.1L179.5 151.0L177.9 151.9L176.3 152.8L174.7 153.7L173.0 154.7L171.4 155.8L169.7 156.9L168.0 158.0L166.5 159.1L164.9 160.1L163.4 161.2L161.9 162.3L160.3 163.4L158.8 164.5L157.3 165.7L155.9 166.9L154.4 168.1L153.0 169.3L151.5 170.6L150.1 171.9L148.8 173.2L147.4 174.6L146.1 176.0L144.9 177.4L143.8 178.8L142.6 180.2L141.5 181.6L140.3 183.1L139.2 184.6L138.1 186.1L137.0 187.7L135.9 189.3L134.8 191.0L133.8 192.6L132.7 194.3L131.7 196.0L130.7 197.7L129.7 199.5L128.8 201.2L127.9 203.0L127.0 204.8L126.1 206.5L125.3 208.2L124.6 209.9L123.8 211.7L123.0 213.6L122.3 215.4L121.6 217.3L120.8 219.2L120.1 221.2L119.5 223.1L118.8 225.1L118.2 227.0L117.6 229.0L117.0 230.9L116.4 232.8L115.9 234.6L115.4 236.5L114.9 238.3L114.5 240.0L114.1 241.7L113.6 243.7L113.2 245.6L112.9 247.5L112.7 249.4L112.5 251.3L112.3 253.1L112.2 255.0L112.1 256.8L112.0 258.7L111.9 260.6L111.8 262.5L111.7 264.5L111.6 266.5L111.4 268.6L111.2 270.7L111.2 270.7" stroke="url(#bandg)" stroke-width="14.5" fill="none"/>
<path d="M94.3 270.4L94.3 271.4L94.4 272.4L94.4 273.3L94.5 274.3L94.5 275.2L94.6 276.2L94.6 277.1L94.7 278.0L94.7 279.0L94.7 279.9L94.8 280.9L94.8 281.8L94.9 282.8L94.9 283.7L95.0 284.7L95.0 285.7L95.1 286.7L95.1 287.7L95.2 288.7L95.2 289.7L95.3 290.7L95.4 291.8L95.5 292.9L95.6 293.9L95.7 295.1L95.8 296.2L95.9 297.3L96.0 298.5L96.2 299.6L96.3 300.8L96.3 300.8" stroke="#fb9191" stroke-width="13.5" fill="none"/>
<path d="M96.3 300.8L96.4 301.7L96.5 302.6L96.6 303.5L96.8 304.5L96.9 305.4L97.0 306.4L97.1 307.4L97.3 308.3L97.4 309.3L97.5 310.4L97.7 311.4L97.8 312.4L97.9 313.4L98.1 314.5L98.2 315.5L98.4 316.6L98.5 317.6L98.7 318.7L98.9 319.8L99.0 320.9L99.2 321.9L99.4 323.0L99.6 324.1L99.7 325.2L99.9 326.2L100.1 327.3L100.3 328.4L100.5 329.5L100.7 330.5L100.9 331.6L100.9 331.6" stroke="#ed5b5b" stroke-width="13.5" fill="none"/>
<path d="M100.9 331.6L101.1 332.6L101.3 333.7L101.6 334.7L101.8 335.8L102.0 336.8L102.3 337.8L102.5 338.8L102.8 339.8L103.0 340.8L103.3 341.8L103.6 342.9L103.9 343.9L104.2 345.0L104.5 346.1L104.8 347.1L105.2 348.2L105.5 349.3L105.8 350.3L106.2 351.4L106.5 352.4L106.9 353.4L107.2 354.5L107.6 355.5L108.0 356.5L108.3 357.6L108.7 358.6L109.1 359.6L109.5 360.6L109.9 361.6L109.9 361.6" stroke="#ff9b9b" stroke-width="13.5" fill="none"/>
<path d="M109.9 361.6L110.3 362.6L110.7 363.6L111.1 364.5L111.6 365.5L112.0 366.5L112.4 367.4L112.9 368.4L113.3 369.3L113.8 370.2L114.3 371.2L114.7 372.1L115.2 373.0L115.7 373.9L116.2 374.7L116.7 375.6L117.2 376.5L117.8 377.5L118.5 378.5L119.1 379.5L119.7 380.4L120.4 381.3L121.0 382.3L121.7 383.2L122.4 384.0L123.0 384.9L123.7 385.8L124.4 386.6L125.1 387.4L125.8 388.2L126.5 389.0L126.5 389.0" stroke="#f15c5c" stroke-width="13.5" fill="none"/>
<path d="M126.5 389.0L127.3 389.8L128.0 390.6L128.8 391.3L129.5 392.1L130.3 392.9L131.1 393.6L131.8 394.3L132.6 395.1L133.5 395.8L134.3 396.5L135.1 397.3L136.0 398.0L136.8 398.7L137.7 399.5L138.6 400.2L139.4 400.8L140.1 401.4L140.9 402.1L141.7 402.7L142.5 403.3L143.3 403.9L144.2 404.6L145.0 405.2L145.9 405.8L146.7 406.4L147.6 407.1L148.5 407.7L149.4 408.3L150.3 408.9L150.3 408.9" stroke="#ff9f9f" stroke-width="13.5" fill="none"/>
<path d="M150.3 408.9L151.2 409.5L152.1 410.2L153.0 410.8L153.9 411.4L154.9 412.0L155.8 412.6L156.7 413.1L157.7 413.7L158.6 414.3L159.6 414.9L160.5 415.4L161.4 416.0L162.4 416.5L163.3 417.1L164.3 417.6L165.2 418.1L166.1 418.6L167.1 419.1L168.0 419.6L168.9 420.1L169.8 420.5L170.8 421.0L171.8 421.5L172.8 421.9L173.8 422.4L174.8 422.8L175.8 423.3L176.8 423.7L177.8 424.1L177.8 424.1" stroke="#ff6363" stroke-width="13.5" fill="none"/>
<path d="M177.8 424.1L178.8 424.5L179.8 424.9L180.8 425.3L181.8 425.7L182.8 426.0L183.8 426.4L184.8 426.7L185.8 427.1L186.8 427.4L187.8 427.7L188.8 428.0L189.8 428.3L190.8 428.6L191.8 428.9L192.8 429.2L193.8 429.4L194.9 429.7L195.9 429.9L196.9 430.2L198.0 430.4L199.0 430.6L200.1 430.8L201.2 431.0L202.2 431.2L203.3 431.4L204.3 431.6L205.3 431.8L206.4 432.0L207.4 432.1L208.4 432.3L208.4 432.3" stroke="#ff9f9f" stroke-width="13.5" fill="none"/>
<path d="M208.4 432.3L209.5 432.4L210.5 432.5L211.6 432.7L212.6 432.8L213.7 432.9L214.8 433.0L215.9 433.1L216.9 433.2L218.0 433.3L219.1 433.4L220.2 433.5L221.3 433.6L222.4 433.6L223.5 433.7L224.6 433.7L225.7 433.8L226.8 433.8L227.9 433.8L228.9 433.8L230.0 433.8L231.1 433.8L232.2 433.8L233.3 433.8L234.3 433.8L235.4 433.7L236.4 433.7L237.5 433.6L238.5 433.6L239.6 433.5L239.6 433.5" stroke="#ff6262" stroke-width="13.5" fill="none"/>
<path d="M239.6 433.5L240.6 433.4L241.8 433.3L242.9 433.2L244.1 433.0L245.2 432.9L246.4 432.7L247.5 432.5L248.7 432.3L249.8 432.1L250.9 431.9L252.0 431.6L253.2 431.4L254.3 431.1L255.3 430.9L256.4 430.6L257.5 430.3L258.6 430.0L259.6 429.7L260.7 429.4L261.7 429.1L262.7 428.8L263.7 428.5L264.7 428.2L265.7 427.9L266.7 427.6L267.7 427.3L268.6 426.9L269.6 426.6L270.5 426.3L270.5 426.3" stroke="#ff9e9e" stroke-width="13.5" fill="none"/>
<path d="M270.5 426.3L271.4 426.0L272.3 425.7L273.2 425.4L274.3 425.0L275.4 424.6L276.5 424.2L277.5 423.8L278.6 423.5L279.6 423.1L280.7 422.7L281.7 422.2L282.7 421.8L283.7 421.4L284.7 421.0L285.7 420.5L286.7 420.1L287.7 419.6L288.6 419.1L289.6 418.6L290.6 418.1L291.5 417.6L292.5 417.1L293.4 416.5L294.3 415.9L295.3 415.3L296.2 414.7L297.1 414.1L298.0 413.4L298.9 412.7L299.8 412.0L299.8 412.0" stroke="#e35757" stroke-width="13.5" fill="none"/>
<path d="M299.8 412.0L300.7 411.3L301.6 410.5L302.5 409.7L303.3 408.9L304.1 408.1L305.0 407.3L305.8 406.5L306.5 405.7L307.3 404.8L308.1 404.0L308.8 403.2L309.5 402.3L310.2 401.5L310.9 400.6L311.6 399.8L312.2 399.0L312.9 398.2L313.5 397.4L314.1 396.6L314.7 395.8L315.3 395.0L315.9 394.3L316.4 393.5L317.1 392.6L317.8 391.7L318.4 390.8L319.0 389.9L319.6 389.0L320.2 388.2L320.7 387.3L320.7 387.3" stroke="#e48484" stroke-width="13.5" fill="none"/>
<path d="M320.7 387.3L321.2 386.4L321.7 385.6L322.2 384.7L322.7 383.8L323.1 382.9L323.6 381.9L324.1 380.9L324.6 379.9L325.0 378.8L325.6 377.7L326.1 376.5L326.7 375.2L327.0 374.4L327.4 373.6L327.7 372.8L328.1 371.9L328.5 371.0L328.8 370.0L329.2 369.1L329.6 368.1L330.0 367.1L330.4 366.1L330.8 365.1L331.1 364.1L331.5 363.0L331.9 362.0L332.3 360.9L332.7 359.8L333.1 358.8L333.1 358.8" stroke="#c84d4d" stroke-width="13.5" fill="none"/>
<path d="M333.1 358.8L333.5 357.7L333.9 356.7L334.3 355.6L334.7 354.6L335.1 353.5L335.4 352.5L335.8 351.5L336.2 350.5L336.6 349.5L336.9 348.5L337.3 347.6L337.6 346.7L338.0 345.8L338.3 344.9L338.6 344.1L338.9 343.3L339.2 342.6L339.7 341.4L340.2 340.3L340.7 339.2L341.1 338.2L341.6 337.3L342.0 336.3L342.4 335.4L342.9 334.5L343.3 333.6L343.7 332.8L344.1 331.9L344.1 331.9" stroke="#d07979" stroke-width="13.5" fill="none"/>
<path d="M344.1 331.9L344.5 331.0L345.0 330.2L345.4 329.3L345.8 328.4L346.2 327.4L346.6 326.5L347.1 325.5L347.5 324.5L347.9 323.5L348.3 322.4L348.7 321.4L349.0 320.5L349.4 319.5L349.7 318.6L350.1 317.6L350.4 316.6L350.8 315.6L351.1 314.6L351.5 313.6L351.8 312.6L352.1 311.6L352.5 310.6L352.8 309.6L353.1 308.5L353.4 307.5L353.7 306.4L354.0 305.3L354.3 304.3L354.6 303.2L354.9 302.1L354.9 302.1" stroke="#c14a4a" stroke-width="13.5" fill="none"/>
<path d="M354.9 302.1L355.1 301.0L355.4 299.9L355.6 298.8L355.8 297.8L356.0 296.7L356.2 295.7L356.4 294.6L356.6 293.6L356.8 292.5L356.9 291.4L357.1 290.4L357.2 289.3L357.4 288.2L357.5 287.1L357.6 286.0L357.8 285.0L357.9 283.9L358.0 282.8L358.1 281.7L358.2 280.6L358.3 279.6L358.4 278.5L358.5 277.4L358.5 276.4L358.6 275.4L358.6 274.3L358.7 273.3L358.7 272.3L358.8 271.2L358.8 271.2" stroke="#ce7777" stroke-width="13.5" fill="none"/>
<path d="M358.8 271.2L358.8 270.2L358.9 269.2L358.9 268.2L359.0 267.2L359.0 266.2L359.0 265.2L359.1 264.2L359.1 263.2L359.1 262.2L359.1 261.1L359.1 260.1L359.0 259.0L359.0 258.0L358.9 256.9L358.8 255.8L358.7 254.7L358.6 253.6L358.4 252.4L358.3 251.2L358.1 250.0L357.9 248.8L357.6 247.6L357.4 246.7L357.2 245.8L357.0 244.9L356.8 244.0L356.6 243.0L356.3 242.1L356.1 241.1L355.9 240.2L355.6 239.2L355.6 239.2" stroke="#b34545" stroke-width="13.5" fill="none"/>
<path d="M355.6 239.2L355.3 238.3L355.1 237.3L354.8 236.3L354.5 235.3L354.1 234.3L353.8 233.3L353.5 232.3L353.1 231.3L352.8 230.2L352.4 229.2L352.0 228.1L351.6 227.0L351.1 226.0L350.7 224.9L350.2 223.8L349.7 222.7L349.2 221.6L348.7 220.4L348.2 219.3L347.6 218.1L347.0 217.0L346.6 216.2L346.2 215.3L345.8 214.5L345.3 213.7L344.9 212.8L344.4 211.9L343.9 211.1L343.4 210.2L343.4 210.2" stroke="#cb7676" stroke-width="13.5" fill="none"/>
<path d="M343.4 210.2L342.9 209.3L342.4 208.4L341.9 207.4L341.3 206.5L340.8 205.6L340.2 204.6L339.7 203.7L339.1 202.8L338.5 201.8L338.0 200.9L337.4 199.9L336.8 199.0L336.2 198.0L335.6 197.1L335.0 196.1L334.4 195.2L333.8 194.3L333.2 193.3L332.6 192.4L332.0 191.5L331.4 190.6L330.8 189.7L330.3 188.8L329.7 187.9L329.1 187.0L328.5 186.1L327.9 185.3L327.3 184.5L327.3 184.5" stroke="#c24a4a" stroke-width="13.5" fill="none"/>
<path d="M327.3 184.5L326.7 183.6L326.2 182.8L325.6 182.0L325.0 181.2L324.5 180.5L323.9 179.7L323.4 179.0L322.9 178.3L322.0 177.2L321.2 176.2L320.4 175.2L319.6 174.2L318.8 173.3L318.0 172.3L317.2 171.5L316.4 170.6L315.6 169.8L314.8 169.0L314.0 168.2L313.3 167.4L312.5 166.7L311.7 166.0L311.0 165.3L310.2 164.6L309.5 163.9L308.7 163.2L308.0 162.6L307.3 161.9L306.5 161.3L305.8 160.7L305.8 160.7" stroke="#d17979" stroke-width="13.5" fill="none"/>
<path d="M305.8 160.7L305.1 160.1L304.4 159.4L303.6 158.8L302.9 158.2L302.2 157.6L301.4 156.9L300.7 156.2L299.9 155.6L299.1 154.9L298.3 154.2L297.6 153.5L296.8 152.8L296.0 152.2L295.2 151.5L294.4 150.8L293.6 150.1L292.8 149.5L292.0 148.8L291.2 148.2L290.4 147.5L289.5 146.8L288.7 146.2L287.8 145.6L287.0 144.9L286.1 144.3L285.2 143.7L284.4 143.1L283.5 142.5L282.6 141.9L281.6 141.3L281.6 141.3" stroke="#c94d4d" stroke-width="13.5" fill="none"/>
<path d="M281.6 141.3L280.7 140.7L279.8 140.2L278.8 139.6L277.9 139.1L277.0 138.6L276.0 138.1L275.1 137.6L274.2 137.1L273.2 136.6L272.2 136.2L271.3 135.7L270.3 135.2L269.3 134.8L268.3 134.3L267.3 133.9L266.3 133.5L265.3 133.1L264.3 132.7L263.3 132.3L262.2 131.9L261.2 131.5L260.1 131.2L259.1 130.8L258.0 130.5L256.9 130.2L255.8 129.9L254.7 129.6L253.6 129.3L252.5 129.0L252.5 129.0" stroke="#ed8a8a" stroke-width="13.5" fill="none"/>
<path d="M252.5 129.0L251.4 128.8L250.4 128.6L249.4 128.4L248.3 128.2L247.3 128.0L246.3 127.9L245.2 127.7L244.2 127.6L243.1 127.5L242.1 127.3L241.0 127.2L240.0 127.1L238.9 127.0L237.8 127.0L236.8 126.9L235.7 126.8L234.6 126.8L233.5 126.8L232.5 126.7L231.4 126.7L230.3 126.7L229.2 126.7L228.2 126.7L227.1 126.7L226.0 126.7L224.9 126.7L223.9 126.8L222.8 126.8L221.7 126.8L220.7 126.9L220.7 126.9" stroke="#e15656" stroke-width="13.5" fill="none"/>
<path d="M220.7 126.9L219.6 127.0L218.6 127.0L217.5 127.1L216.5 127.2L215.4 127.3L214.4 127.4L213.3 127.5L212.3 127.6L211.2 127.7L210.1 127.8L209.0 127.9L208.0 128.1L206.9 128.2L205.8 128.4L204.7 128.5L203.6 128.7L202.6 128.9L201.5 129.0L200.4 129.2L199.3 129.4L198.3 129.6L197.2 129.9L196.1 130.1L195.1 130.3L194.0 130.6L193.0 130.8L192.0 131.1L190.9 131.4L189.9 131.7L189.9 131.7" stroke="#ff9494" stroke-width="13.5" fill="none"/>
<path d="M189.9 131.7L188.9 132.0L187.9 132.3L186.9 132.6L185.8 132.9L184.8 133.3L183.7 133.7L182.7 134.1L181.6 134.5L180.6 134.9L179.6 135.4L178.6 135.8L177.6 136.2L176.7 136.7L175.7 137.2L174.8 137.6L173.8 138.1L172.9 138.6L171.9 139.1L171.0 139.7L170.1 140.2L169.2 140.7L168.3 141.2L167.4 141.8L166.5 142.3L165.6 142.9L164.7 143.5L163.8 144.0L162.9 144.6L162.0 145.2L161.1 145.8L161.1 145.8" stroke="#ee5b5b" stroke-width="13.5" fill="none"/>
<path d="M161.1 145.8L160.2 146.4L159.4 146.9L158.6 147.5L157.8 148.0L157.0 148.6L156.2 149.2L155.3 149.7L154.5 150.3L153.7 150.9L152.9 151.5L152.0 152.1L151.2 152.7L150.4 153.4L149.5 154.0L148.7 154.7L147.9 155.3L147.0 156.0L146.2 156.7L145.4 157.3L144.6 158.1L143.7 158.8L142.9 159.5L142.1 160.2L141.3 161.0L140.5 161.8L139.7 162.5L138.8 163.3L138.0 164.2L137.3 165.0L136.5 165.8L136.5 165.8" stroke="#f99191" stroke-width="13.5" fill="none"/>
<path d="M136.5 165.8L135.7 166.7L134.9 167.6L134.3 168.3L133.6 169.1L133.0 169.8L132.3 170.6L131.7 171.4L131.1 172.2L130.4 173.0L129.8 173.8L129.2 174.7L128.5 175.5L127.9 176.3L127.3 177.2L126.7 178.0L126.1 178.9L125.5 179.8L124.9 180.7L124.3 181.5L123.7 182.4L123.1 183.3L122.5 184.3L121.9 185.2L121.3 186.1L120.8 187.0L120.2 188.0L119.7 188.9L119.1 189.8L118.6 190.8L118.0 191.7L118.0 191.7" stroke="#ea5a5a" stroke-width="13.5" fill="none"/>
<path d="M118.0 191.7L117.5 192.7L116.9 193.7L116.4 194.6L115.9 195.6L115.4 196.6L114.9 197.6L114.4 198.6L113.9 199.6L113.5 200.5L113.0 201.4L112.6 202.4L112.2 203.3L111.7 204.3L111.3 205.3L110.9 206.3L110.5 207.3L110.1 208.3L109.7 209.3L109.3 210.3L108.9 211.3L108.5 212.4L108.1 213.4L107.7 214.4L107.3 215.5L106.9 216.5L106.6 217.5L106.2 218.6L105.9 219.6L105.9 219.6" stroke="#ff9696" stroke-width="13.5" fill="none"/>
<path d="M105.9 219.6L105.5 220.7L105.2 221.7L104.8 222.7L104.5 223.8L104.2 224.8L103.9 225.8L103.6 226.8L103.3 227.9L103.0 228.9L102.7 229.9L102.4 230.9L102.1 231.8L101.9 232.8L101.6 233.8L101.4 234.7L101.1 235.7L100.9 236.6L100.7 237.5L100.4 238.5L100.2 239.7L99.9 240.9L99.7 242.0L99.5 243.2L99.3 244.4L99.1 245.5L98.9 246.6L98.8 247.7L98.7 248.8L98.5 249.9L98.4 250.9L98.4 250.9" stroke="#e55858" stroke-width="13.5" fill="none"/>
<path d="M98.4 250.9L98.4 252.0L98.3 253.0L98.2 254.1L98.1 255.1L98.1 256.1L98.0 257.1L98.0 258.0L97.9 259.0L97.9 260.0L97.8 260.9L97.8 261.9L97.8 262.8L97.7 263.7L97.6 264.7L97.6 265.6L97.5 266.5L97.5 267.5L97.4 268.4L97.3 269.4L97.3 269.4" stroke="#ff9494" stroke-width="13.5" fill="none"/>
<path d="M101.0 270.0L101.1 272.0L101.2 273.9L101.3 275.8L101.4 277.7L101.5 279.6L101.6 281.5L101.7 283.4L101.7 285.3L101.9 287.3L102.0 289.3L102.1 291.3L102.3 293.4L102.5 295.5L102.7 297.7L103.0 300.0L103.2 301.8L103.5 303.6L103.7 305.5L104.0 307.5L104.2 309.5L104.5 311.5L104.8 313.5L105.1 315.6L105.4 317.7L105.7 319.8L106.0 321.9L106.4 324.0L106.8 326.1L107.1 328.2L107.5 330.3L108.0 332.3L108.4 334.3L108.8 336.2L109.3 338.1L109.8 340.0L110.4 342.1L111.0 344.1L111.6 346.2L112.2 348.2L112.9 350.3L113.6 352.3L114.3 354.2L115.0 356.2L115.8 358.1L116.5 360.0L117.3 361.9L118.1 363.7L119.0 365.5L119.8 367.2L120.7 368.9L121.6 370.6L122.5 372.2L123.6 373.9L124.7 375.7L125.9 377.5L127.1 379.1L128.3 380.7L129.6 382.2L130.9 383.7L132.2 385.2L133.6 386.6L135.0 388.0L136.4 389.4L138.0 390.8L139.5 392.2L141.2 393.6L142.9 395.0L144.3 396.2L145.8 397.4L147.4 398.6L149.0 399.8L150.7 401.0L152.4 402.2L154.1 403.4L155.8 404.5L157.6 405.7L159.4 406.9L161.2 408.0L163.0 409.1L164.8 410.2L166.6 411.2L168.4 412.2L170.2 413.1L172.0 414.0L173.7 414.9L175.6 415.8L177.5 416.7L179.4 417.5L181.3 418.3L183.2 419.0L185.0 419.7L186.9 420.4L188.8 421.0L190.7 421.6L192.6 422.1L194.5 422.6L196.5 423.1L198.4 423.6L200.4 424.0L202.4 424.4L204.5 424.8L206.4 425.1L208.4 425.4L210.4 425.7L212.4 426.0L214.4 426.2L216.5 426.4L218.6 426.6L220.7 426.8L222.8 426.9L224.9 427.0L226.9 427.0L229.0 427.1L231.1 427.1L233.1 427.1L235.1 427.0L237.1 426.9L239.0 426.8L241.1 426.6L243.2 426.3L245.3 426.0L247.5 425.7L249.6 425.3L251.7 424.8L253.7 424.3L255.8 423.8L257.8 423.2L259.8 422.7L261.8 422.1L263.7 421.5L265.6 420.8L267.4 420.2L269.2 419.6L271.0 419.0L273.1 418.3L275.2 417.5L277.2 416.8L279.2 416.0L281.1 415.2L282.9 414.4L284.7 413.5L286.5 412.6L288.2 411.7L289.9 410.7L291.6 409.7L293.2 408.6L294.8 407.4L296.4 406.1L297.9 404.8L299.4 403.3L300.9 401.8L302.3 400.3L303.7 398.7L305.0 397.2L306.3 395.6L307.6 394.0L308.8 392.5L309.9 391.0L311.0 389.5L312.3 387.7L313.4 386.1L314.5 384.5L315.4 383.0L316.2 381.5L317.1 379.8L318.0 378.0L318.9 376.0L319.9 373.8L320.8 371.8L321.5 370.2L322.2 368.4L322.9 366.6L323.7 364.7L324.4 362.7L325.2 360.6L326.0 358.5L326.8 356.4L327.6 354.3L328.3 352.2L329.1 350.1L329.9 348.1L330.6 346.1L331.3 344.3L332.0 342.5L332.7 340.8L333.5 338.8L334.5 336.5L335.4 334.4L336.3 332.5L337.2 330.7L338.1 329.0L338.9 327.2L339.7 325.5L340.5 323.8L341.2 322.0L342.0 320.0L342.7 318.1L343.4 316.3L344.1 314.4L344.7 312.4L345.4 310.5L346.0 308.5L346.6 306.6L347.2 304.6L347.8 302.5L348.3 300.5L348.8 298.4L349.2 296.4L349.6 294.5L349.9 292.5L350.2 290.4L350.5 288.4L350.8 286.3L351.1 284.2L351.3 282.1L351.5 280.0L351.6 278.0L351.8 276.0L351.9 274.0L352.0 272.0L352.1 269.9L352.2 267.9L352.3 266.0L352.3 264.1L352.3 262.2L352.3 260.2L352.2 258.3L352.1 256.4L351.9 254.4L351.6 252.3L351.2 250.1L350.8 248.1L350.4 246.4L350.0 244.6L349.6 242.8L349.1 241.0L348.6 239.2L348.0 237.3L347.4 235.4L346.8 233.5L346.0 231.5L345.3 229.5L344.4 227.5L343.6 225.4L342.6 223.3L341.5 221.1L340.6 219.2L339.8 217.7L338.9 216.0L338.0 214.3L337.0 212.6L336.0 210.8L335.0 209.0L333.9 207.2L332.8 205.3L331.6 203.5L330.5 201.6L329.3 199.7L328.2 197.9L327.0 196.1L325.8 194.3L324.6 192.5L323.5 190.8L322.3 189.1L321.2 187.5L320.1 186.0L319.0 184.5L318.0 183.1L316.7 181.4L315.2 179.5L313.7 177.7L312.2 176.0L310.7 174.4L309.3 173.0L307.8 171.6L306.4 170.2L305.0 168.9L303.6 167.7L302.1 166.4L300.7 165.2L299.2 163.9L297.7 162.7L296.2 161.3L294.7 160.0L293.1 158.6L291.6 157.3L290.1 156.0L288.5 154.7L287.0 153.4L285.4 152.2L283.8 151.0L282.2 149.8L280.6 148.7L278.9 147.6L277.2 146.5L275.5 145.5L273.7 144.5L272.0 143.6L270.2 142.7L268.4 141.8L266.5 140.9L264.7 140.1L262.8 139.3L260.9 138.6L259.0 137.9L257.0 137.3L255.1 136.7L253.1 136.1L251.0 135.6L249.1 135.2L247.2 134.9L245.3 134.5L243.3 134.3L241.4 134.1L239.4 133.9L237.4 133.7L235.3 133.6L233.3 133.5L231.3 133.5L229.2 133.4L227.2 133.4L225.1 133.5L223.1 133.5L221.0 133.6L219.0 133.8L217.0 133.9L215.0 134.1L212.9 134.3L210.9 134.5L208.8 134.8L206.8 135.0L204.7 135.3L202.6 135.7L200.6 136.1L198.6 136.5L196.6 136.9L194.6 137.4L192.7 137.9L190.8 138.4L189.0 139.0L187.0 139.7L185.1 140.4L183.2 141.2L181.4 141.9L179.6 142.8L177.8 143.7L176.1 144.6L174.3 145.5L172.6 146.5L170.9 147.6L169.2 148.6L167.5 149.7L165.7 150.8L164.0 152.0L162.4 153.1L160.8 154.2L159.2 155.3L157.6 156.4L156.0 157.6L154.5 158.8L152.9 160.0L151.3 161.2L149.7 162.5L148.2 163.8L146.6 165.2L145.1 166.6L143.6 168.1L142.2 169.6L140.7 171.2L139.4 172.7L138.2 174.2L137.0 175.6L135.8 177.2L134.6 178.7L133.4 180.3L132.2 181.9L131.0 183.6L129.9 185.3L128.7 187.0L127.6 188.8L126.5 190.5L125.5 192.3L124.4 194.1L123.4 196.0L122.4 197.8L121.4 199.7L120.5 201.6L119.6 203.4L118.7 205.2L117.9 207.0L117.1 208.9L116.3 210.8L115.5 212.8L114.8 214.8L114.0 216.8L113.3 218.8L112.6 220.8L111.9 222.8L111.3 224.8L110.6 226.8L110.0 228.8L109.5 230.7L108.9 232.7L108.4 234.6L107.9 236.4L107.4 238.2L107.0 240.0L106.5 242.2L106.1 244.4L105.8 246.5L105.5 248.5L105.3 250.6L105.1 252.5L104.9 254.5L104.8 256.4L104.7 258.4L104.6 260.3L104.5 262.2L104.4 264.1L104.3 266.1L104.2 268.0L104.0 270.0L104.0 270.0" stroke="#00ee00" stroke-width="2" fill="none"/>
<g fill="none" stroke="#111" stroke-width="1.1" stroke-dasharray="13 6"><circle cx="97.9" cy="276.9" r="3"/><circle cx="99.5" cy="300.4" r="3"/><circle cx="102.9" cy="324.6" r="3"/><circle cx="108.6" cy="348.3" r="3"/><circle cx="118.1" cy="371.4" r="3"/><circle cx="133.3" cy="391.2" r="3"/><circle cx="152.1" cy="406.2" r="3"/><circle cx="174.1" cy="419.0" r="3"/><circle cx="196.7" cy="426.8" r="3"/><circle cx="221.5" cy="430.3" r="3"/><circle cx="245.9" cy="429.5" r="3"/><circle cx="269.5" cy="423.2" r="3"/><circle cx="292.6" cy="413.2" r="3"/><circle cx="310.3" cy="396.2" r="3"/><circle cx="323.1" cy="375.2" r="3"/><circle cx="332.0" cy="352.4" r="3"/><circle cx="341.2" cy="330.5" r="3"/><circle cx="350.0" cy="307.6" r="3"/><circle cx="354.7" cy="283.5" r="3"/><circle cx="355.8" cy="259.2" r="3"/><circle cx="350.7" cy="234.3" r="3"/><circle cx="340.6" cy="211.7" r="3"/><circle cx="328.1" cy="191.5" r="3"/><circle cx="313.3" cy="172.0" r="3"/><circle cx="294.7" cy="155.3" r="3"/><circle cx="274.5" cy="141.0" r="3"/><circle cx="251.8" cy="132.2" r="3"/><circle cx="227.1" cy="129.9" r="3"/><circle cx="202.0" cy="132.2" r="3"/><circle cx="179.0" cy="139.2" r="3"/><circle cx="158.0" cy="151.8" r="3"/><circle cx="138.9" cy="168.0" r="3"/><circle cx="124.1" cy="187.8" r="3"/><circle cx="113.1" cy="209.5" r="3"/><circle cx="105.3" cy="232.7" r="3"/><circle cx="101.3" cy="257.2" r="3"/></g>
<path d="M111.0 269.5L111.1 271.6L111.2 273.8L111.3 275.9L111.4 278.0L111.4 280.0L111.5 282.1L111.6 284.1L111.7 286.0L111.8 287.9L112.0 289.7L112.1 291.5L112.4 293.1L112.7 294.7L113.1 296.4L113.6 298.3L114.1 300.2L114.7 302.0L115.3 303.7L116.0 305.4L116.7 307.0L117.5 308.6L118.4 310.2L119.3 311.7L120.3 313.3L121.2 314.7L122.2 315.9L123.3 317.2L124.4 318.5L125.7 319.8L127.0 321.1L128.4 322.4L129.9 323.7L131.4 325.1L132.9 326.4L134.4 327.8L136.0 329.1L137.6 330.6L139.1 332.1L140.6 333.6L142.0 335.0L143.3 336.4L144.5 337.6L145.8 338.8L147.1 339.9L148.4 340.9L149.8 341.9L151.3 342.8L153.0 343.7L154.4 344.3L156.0 345.0L157.6 345.6L159.3 346.3L161.1 347.0L163.0 347.6L164.9 348.2L166.9 348.8L168.8 349.3L170.8 349.8L172.8 350.3L174.7 350.7L176.6 351.0L178.5 351.3L180.3 351.5L182.0 351.7L183.7 351.7L185.5 351.7L187.3 351.7L189.1 351.6L191.0 351.4L192.9 351.1L194.8 350.8L196.6 350.5L198.5 350.0L200.4 349.6L202.2 349.1L204.0 348.6L205.7 348.1L207.4 347.6L209.0 347.0L210.6 346.4L212.5 345.7L214.3 344.9L216.0 344.1L217.5 343.3L219.0 342.4L220.5 341.5L221.9 340.5L223.2 339.5L224.6 338.3L225.9 337.1L227.3 335.8L228.6 334.5L229.7 333.3L230.9 331.9L232.0 330.5L233.1 329.0L234.2 327.5L235.3 325.9L236.4 324.3L237.4 322.7L238.3 321.0L239.2 319.4L240.1 317.7L240.8 316.0L241.5 314.4L242.1 312.8L242.6 311.2L243.1 309.4L243.5 307.6L243.9 305.7L244.3 303.8L244.6 301.8L244.9 299.8L245.1 297.9L245.4 295.9L245.6 294.0L245.8 292.1L245.9 290.2L246.1 288.2L246.3 286.2L246.5 284.3L246.6 282.6L246.6 280.9L246.6 279.3L246.6 277.6L246.5 275.9L246.4 274.0L246.3 272.0L246.0 269.7L245.9 268.0L245.7 266.2L245.5 264.3L245.2 262.3L245.0 260.3L244.7 258.2L244.5 256.1L244.2 254.1L243.8 252.0L243.5 250.0L243.1 248.1L242.7 246.2L242.3 244.5L241.8 242.9L241.4 241.5L240.8 239.9L240.0 238.0L239.2 236.3L238.4 234.7L237.5 233.2L236.6 231.9L235.7 230.6L234.7 229.4L233.6 228.2L232.4 227.1L231.2 226.1L230.0 225.1L228.7 224.3L227.3 223.5L225.8 222.7L224.1 222.0L222.3 221.3L220.5 220.6L218.7 220.0L216.8 219.4L214.9 218.9L213.1 218.4L211.4 218.0L209.7 217.7L208.1 217.5L206.5 217.4L204.8 217.3L203.1 217.4L201.3 217.5L199.4 217.6L197.4 217.8L195.3 217.9L193.1 218.0L192.1 218.0" stroke="#0c3892" stroke-width="14" fill="none"/>
<path d="M97.5 270.4L97.6 271.4L97.6 272.4L97.7 273.4L97.7 274.3L97.8 275.3L97.8 276.3L97.8 277.4L97.9 278.4L97.9 279.4L97.9 280.5L98.0 281.5L98.0 282.6L98.0 283.6L98.1 284.7L98.1 285.7L98.2 286.8L98.3 287.9L98.3 288.9L98.4 290.0L98.5 291.1L98.6 292.1L98.8 293.2L98.9 294.2L99.1 295.3L99.2 296.4L99.4 297.4L99.7 298.4L99.9 299.6L100.2 300.8L100.5 301.9L100.5 301.9" stroke="#fc9292" stroke-width="13" fill="none"/>
<path d="M100.5 301.9L100.9 303.1L101.2 304.2L101.6 305.3L101.9 306.4L102.3 307.5L102.7 308.6L103.1 309.6L103.6 310.7L104.0 311.7L104.5 312.8L105.0 313.8L105.5 314.8L106.1 315.8L106.6 316.8L107.2 317.8L107.8 318.8L108.4 319.7L109.0 320.7L109.6 321.7L110.3 322.6L111.0 323.5L111.7 324.4L112.4 325.3L113.1 326.1L113.9 327.0L114.6 327.8L115.4 328.6L116.1 329.3L116.9 330.1L117.7 330.9L117.7 330.9" stroke="#f55e5e" stroke-width="13" fill="none"/>
<path d="M117.7 330.9L118.5 331.6L119.3 332.3L120.1 333.1L120.9 333.8L121.6 334.5L122.4 335.2L123.2 335.9L124.0 336.5L124.7 337.2L125.5 337.9L126.2 338.5L126.9 339.2L127.6 339.8L128.3 340.4L128.9 341.1L129.6 341.7L130.3 342.4L130.9 343.0L131.6 343.7L132.3 344.4L133.0 345.2L133.7 345.9L134.4 346.6L135.2 347.4L135.9 348.1L136.8 348.9L137.6 349.6L138.5 350.4L139.4 351.1L139.4 351.1" stroke="#ffa2a2" stroke-width="13" fill="none"/>
<path d="M139.4 351.1L140.4 351.8L141.4 352.6L142.5 353.3L143.6 353.9L144.8 354.6L146.0 355.3L147.2 355.9L148.1 356.3L149.0 356.7L149.9 357.1L150.8 357.4L151.7 357.8L152.7 358.2L153.7 358.6L154.7 359.0L155.7 359.3L156.7 359.7L157.8 360.1L158.8 360.4L159.9 360.8L161.0 361.1L162.1 361.4L163.2 361.7L164.3 362.1L165.4 362.4L166.5 362.6L167.6 362.9L168.8 363.2L169.9 363.4L169.9 363.4" stroke="#fa6060" stroke-width="13" fill="none"/>
<path d="M169.9 363.4L171.0 363.7L172.2 363.9L173.3 364.1L174.4 364.3L175.5 364.5L176.7 364.7L177.8 364.8L178.9 364.9L180.0 365.0L181.1 365.1L182.2 365.2L183.4 365.2L184.5 365.3L185.7 365.2L186.8 365.2L188.0 365.2L189.1 365.1L190.3 365.0L191.4 364.9L192.6 364.8L193.7 364.6L194.9 364.5L196.0 364.3L197.1 364.1L198.2 363.9L199.3 363.7L200.4 363.5L201.5 363.2L202.6 363.0L202.6 363.0" stroke="#ffa2a2" stroke-width="13" fill="none"/>
<path d="M202.6 363.0L203.6 362.7L204.7 362.4L205.7 362.2L206.7 361.9L207.8 361.6L208.7 361.3L209.7 361.0L210.7 360.7L211.6 360.4L212.6 360.1L213.5 359.7L214.4 359.4L215.3 359.1L216.4 358.6L217.6 358.2L218.7 357.7L219.8 357.2L220.9 356.7L222.0 356.2L223.0 355.7L224.1 355.1L225.1 354.5L226.1 353.9L227.1 353.3L228.0 352.7L229.0 352.1L229.9 351.4L230.8 350.7L231.7 350.0L232.6 349.3L232.6 349.3" stroke="#ee5b5b" stroke-width="13" fill="none"/>
<path d="M232.6 349.3L233.4 348.5L234.3 347.8L235.2 347.0L236.0 346.2L236.8 345.4L237.7 344.5L238.4 343.8L239.1 343.0L239.8 342.2L240.5 341.4L241.2 340.6L241.9 339.7L242.6 338.9L243.3 338.0L244.0 337.1L244.6 336.2L245.3 335.3L245.9 334.4L246.6 333.4L247.2 332.5L247.8 331.5L248.4 330.5L249.0 329.6L249.6 328.6L250.1 327.6L250.7 326.6L251.2 325.6L251.7 324.5L252.2 323.5L252.2 323.5" stroke="#dd8080" stroke-width="13" fill="none"/>
<path d="M252.2 323.5L252.7 322.5L253.2 321.5L253.6 320.4L254.0 319.4L254.5 318.3L254.8 317.2L255.2 316.1L255.6 315.0L255.9 313.9L256.2 312.8L256.5 311.7L256.7 310.5L257.0 309.4L257.2 308.3L257.4 307.2L257.6 306.0L257.8 304.9L257.9 303.8L258.1 302.7L258.3 301.6L258.4 300.5L258.5 299.5L258.7 298.4L258.8 297.4L258.9 296.4L259.0 295.4L259.1 294.4L259.2 293.4L259.3 292.5L259.3 292.5" stroke="#bd4848" stroke-width="13" fill="none"/>
<path d="M259.3 292.5L259.4 291.6L259.5 290.7L259.6 289.5L259.7 288.4L259.8 287.3L259.9 286.3L259.9 285.2L260.0 284.2L260.1 283.2L260.1 282.2L260.1 281.2L260.1 280.2L260.1 279.2L260.1 278.2L260.1 277.2L260.1 276.2L260.0 275.2L260.0 274.1L259.9 273.0L259.8 271.9L259.7 270.8L259.6 269.6L259.5 268.3L259.4 267.5L259.3 266.6L259.2 265.7L259.1 264.7L259.0 263.8L258.9 262.8L258.8 261.8L258.7 260.7L258.7 260.7" stroke="#cb7575" stroke-width="13" fill="none"/>
<path d="M258.7 260.7L258.5 259.7L258.4 258.6L258.3 257.5L258.1 256.4L258.0 255.3L257.8 254.2L257.7 253.1L257.5 252.0L257.3 250.9L257.1 249.8L256.9 248.7L256.7 247.6L256.5 246.5L256.3 245.4L256.1 244.3L255.8 243.2L255.6 242.2L255.3 241.1L255.1 240.1L254.8 239.1L254.5 238.1L254.1 237.1L253.8 236.1L253.3 234.9L252.9 233.7L252.4 232.6L251.8 231.4L251.3 230.3L250.8 229.2L250.8 229.2" stroke="#b44545" stroke-width="13" fill="none"/>
<path d="M250.8 229.2L250.2 228.2L249.6 227.1L249.0 226.1L248.3 225.1L247.7 224.1L247.0 223.2L246.3 222.2L245.5 221.3L244.8 220.4L244.0 219.6L243.2 218.7L242.3 217.9L241.5 217.1L240.6 216.3L239.7 215.6L238.7 214.8L237.8 214.1L236.8 213.5L235.8 212.8L234.8 212.2L233.7 211.6L232.7 211.1L231.6 210.6L230.5 210.0L229.4 209.6L228.3 209.1L227.2 208.7L226.1 208.2L225.0 207.8L225.0 207.8" stroke="#dc7f7f" stroke-width="13" fill="none"/>
<path d="M225.0 207.8L223.9 207.5L222.8 207.1L221.7 206.8L220.6 206.4L219.5 206.1L218.4 205.8L217.4 205.6L216.3 205.3L215.3 205.1L214.3 204.8L213.3 204.6L212.0 204.4L210.8 204.2L209.5 204.0L208.3 203.9L207.1 203.9L205.9 203.8L204.7 203.8L203.6 203.9L202.5 203.9L201.5 203.9L200.4 204.0L199.4 204.1L198.4 204.2L197.4 204.2L196.5 204.3L195.5 204.4L194.6 204.4L193.7 204.5L192.9 204.5L192.9 204.5" stroke="#e95959" stroke-width="13" fill="none"/>
<path d="M192.9 204.5L191.9 204.5" stroke="#f99191" stroke-width="13" fill="none"/>
<path d="M104.0 270.0L104.1 272.0L104.2 274.1L104.3 276.1L104.4 278.2L104.4 280.3L104.5 282.3L104.6 284.4L104.7 286.4L104.8 288.4L105.0 290.4L105.2 292.4L105.5 294.3L105.8 296.1L106.3 298.1L106.8 300.2L107.4 302.3L108.1 304.3L108.8 306.2L109.6 308.1L110.4 310.0L111.3 311.8L112.3 313.6L113.3 315.4L114.4 317.1L115.6 318.8L116.7 320.3L118.0 321.8L119.3 323.3L120.7 324.8L122.2 326.2L123.7 327.6L125.2 328.9L126.7 330.3L128.3 331.7L129.8 333.0L131.3 334.3L132.7 335.7L134.2 337.1L135.6 338.5L136.9 339.9L138.3 341.3L139.7 342.7L141.1 344.0L142.6 345.3L144.2 346.6L146.0 347.8L147.9 348.9L150.0 350.0L151.6 350.7L153.3 351.4L155.1 352.2L156.9 352.9L158.8 353.6L160.8 354.2L162.9 354.9L164.9 355.5L167.0 356.1L169.2 356.6L171.3 357.1L173.4 357.5L175.5 357.9L177.5 358.2L179.6 358.5L181.5 358.6L183.5 358.7L185.6 358.7L187.6 358.7L189.7 358.5L191.8 358.3L193.9 358.0L196.0 357.7L198.0 357.3L200.1 356.9L202.0 356.4L204.0 355.9L205.9 355.3L207.8 354.8L209.6 354.2L211.3 353.6L213.0 353.0L215.1 352.2L217.2 351.3L219.1 350.4L220.9 349.4L222.7 348.4L224.4 347.3L226.0 346.2L227.6 344.9L229.2 343.6L230.7 342.2L232.2 340.8L233.6 339.3L234.9 337.9L236.2 336.4L237.5 334.8L238.7 333.2L240.0 331.5L241.1 329.8L242.3 328.0L243.4 326.2L244.4 324.4L245.4 322.6L246.4 320.7L247.2 318.9L248.0 317.0L248.7 315.1L249.3 313.2L249.9 311.2L250.4 309.1L250.8 307.0L251.2 304.9L251.5 302.9L251.8 300.8L252.1 298.7L252.3 296.7L252.5 294.7L252.7 292.8L252.9 290.9L253.1 288.9L253.3 286.8L253.5 284.8L253.6 282.9L253.6 281.1L253.6 279.3L253.6 277.4L253.5 275.5L253.4 273.5L253.2 271.3L253.0 269.0L252.8 267.3L252.6 265.4L252.4 263.5L252.2 261.5L252.0 259.4L251.7 257.3L251.4 255.2L251.1 253.0L250.7 250.9L250.4 248.7L250.0 246.7L249.5 244.7L249.0 242.7L248.5 240.9L248.0 239.2L247.3 237.3L246.4 235.2L245.5 233.2L244.5 231.3L243.5 229.5L242.3 227.9L241.2 226.3L239.9 224.7L238.6 223.3L237.1 221.9L235.6 220.6L234.0 219.4L232.4 218.4L230.6 217.4L228.8 216.4L226.9 215.5L224.9 214.7L222.8 214.0L220.8 213.3L218.7 212.7L216.7 212.1L214.8 211.6L212.9 211.2L210.9 210.8L208.8 210.5L206.8 210.4L204.8 210.3L202.8 210.4L200.8 210.5L198.9 210.6L196.9 210.8L195.0 210.9L193.0 211.0L192.0 211.0" stroke="#00ee00" stroke-width="2" fill="none"/>
<g fill="none" stroke="#111" stroke-width="1.1" stroke-dasharray="13 6"><circle cx="100.8" cy="276.2" r="3"/><circle cx="103.4" cy="301.1" r="3"/><circle cx="115.4" cy="324.1" r="3"/><circle cx="132.4" cy="340.3" r="3"/><circle cx="152.8" cy="355.0" r="3"/><circle cx="177.1" cy="361.7" r="3"/><circle cx="201.9" cy="360.0" r="3"/><circle cx="225.4" cy="350.8" r="3"/><circle cx="243.4" cy="332.7" r="3"/><circle cx="253.8" cy="309.9" r="3"/><circle cx="256.9" cy="286.0" r="3"/><circle cx="255.7" cy="261.1" r="3"/><circle cx="251.0" cy="237.2" r="3"/><circle cx="235.2" cy="216.0" r="3"/><circle cx="211.5" cy="207.3" r="3"/></g>
<path d="M151.9 266.8L152.3 264.7L152.5 262.6L152.7 260.6L153.0 258.7L153.2 256.8L153.5 255.0L153.9 253.3L154.4 251.6L155.0 249.9L155.7 248.2L156.4 246.5L157.2 244.8L158.0 243.1L158.9 241.4L159.9 239.7L160.9 238.1L162.0 236.5L163.2 235.0L164.4 233.6L165.6 232.3L166.9 230.9L168.3 229.6L169.8 228.2L171.3 226.9L172.9 225.6L174.4 224.4L176.0 223.2L177.6 222.2L179.0 221.2L180.4 220.4L182.2 219.5L184.0 218.7L185.9 218.0L187.8 217.4L189.7 216.9L191.7 216.5L193.5 216.1L195.3 215.7L197.0 215.4L199.1 215.0L200.7 214.9L202.2 215.0L204.0 215.0L206.1 215.0L206.1 215.0" stroke="url(#s0g)" stroke-width="10" fill="none"/>
<path d="M141.1 265.0L141.4 263.2L141.6 261.3L141.8 259.4L142.0 257.3L142.3 255.2L142.7 252.9L143.2 250.6L143.9 248.1L144.7 246.0L145.5 244.0L146.3 242.1L147.2 240.1L148.2 238.1L149.3 236.0L150.5 234.0L151.8 232.0L153.2 230.0L154.6 228.1L156.1 226.3L157.6 224.7L159.2 223.1L160.8 221.5L162.5 220.0L164.2 218.5L166.0 217.0L167.8 215.6L169.6 214.3L171.4 213.0L173.2 211.9L175.1 210.8L177.5 209.5L180.0 208.5L182.4 207.6L184.8 206.9L187.1 206.3L189.3 205.7L191.3 205.3L193.2 205.0L194.8 204.6L197.8 204.1L200.4 203.9L202.6 204.0L204.2 204.0L205.8 204.0L205.8 204.0" stroke="url(#s0p)" stroke-width="12" fill="none"/>
<path d="M147.0 266.0L147.3 264.0L147.6 262.0L147.8 260.0L148.0 258.1L148.3 256.1L148.6 254.1L149.1 252.1L149.6 250.0L150.3 248.1L151.0 246.3L151.8 244.5L152.7 242.7L153.6 240.8L154.6 239.0L155.6 237.1L156.8 235.3L158.0 233.5L159.3 231.8L160.6 230.3L162.0 228.8L163.4 227.4L164.9 225.9L166.5 224.5L168.1 223.1L169.7 221.7L171.4 220.4L173.1 219.2L174.8 218.0L176.4 216.9L178.0 216.0L180.0 214.9L182.2 214.0L184.3 213.3L186.4 212.6L188.5 212.1L190.6 211.6L192.5 211.2L194.4 210.8L196.0 210.5L198.5 210.1L200.6 209.9L202.4 210.0L204.1 210.0L206.0 210.0L206.0 210.0" stroke="#10d020" stroke-width="2" fill="none"/>
<g fill="none" stroke="#111" stroke-width="1.1" stroke-dasharray="13 6"><circle cx="144.3" cy="259.7" r="3"/><circle cx="152.6" cy="235.3" r="3"/><circle cx="170.2" cy="216.9" r="3"/><circle cx="193.7" cy="207.4" r="3"/></g>
<defs><linearGradient id="coneg" gradientUnits="userSpaceOnUse" x1="150" y1="258" x2="150" y2="280"><stop offset="0" stop-color="#00b020"/><stop offset="0.5" stop-color="#005010"/><stop offset="1" stop-color="#002a08"/></linearGradient></defs>
<path d="M148.5 255 L165.4 279.6 L136.5 276.5 Z" fill="url(#coneg)"/>
<path d="M154 277 L165.4 279.6 L158 272 Z" fill="#108070"/>
<ellipse cx="137.5" cy="263.5" rx="10.2" ry="12.2" fill="#14ff14" transform="rotate(28 137.5 263.5)"/>
</svg>
</div>

<div id="panelL" class="abs">

</div>
<div id="panelR" class="abs">

</div>
<div class="abs" style="left:714px;top:509px;width:89px;height:4px;background:#000"></div>
<div class="abs" style="left:803px;top:513px;width:90px;height:4px;background:#000"></div>
<div class="abs" style="left:893px;top:509px;width:89px;height:4px;background:#000"></div>
<div class="abs txt hud" style="left:714.5px;top:496px">0</div>
<div class="abs txt hud" style="left:795px;top:496px">50</div>
<div class="abs txt hud" style="left:881.5px;top:496px">100</div>
<div class="abs txt hud" style="left:960px;top:496px">150</div>
<div class="abs txt hud" style="left:866px;top:463.5px;letter-spacing:0.6px">Plunge &#8722;49</div>
<div class="abs txt hud" style="left:866px;top:477.5px;letter-spacing:0.58px">Azimuth 158</div>
<svg class="abs" style="left:947px;top:447px" width="42" height="42">
<defs><radialGradient id="glb" cx="0.42" cy="0.38" r="0.65"><stop offset="0" stop-color="#8fe0d0"/><stop offset="0.55" stop-color="#5ab8b8"/><stop offset="0.85" stop-color="#3c8c96"/><stop offset="1" stop-color="#2a6a80"/></radialGradient>
<linearGradient id="glb2" x1="0" y1="0" x2="0" y2="1"><stop offset="0.7" stop-color="#40a8e0" stop-opacity="0"/><stop offset="1" stop-color="#40a8e8" stop-opacity="0.8"/></linearGradient></defs>
<circle cx="21" cy="21" r="20" fill="url(#glb)"/>
<circle cx="21" cy="21" r="20" fill="url(#glb2)"/>
<path d="M22 13 l5 4 l-5 3 Z" fill="#1a2a2a"/>
<path d="M19 29 l3 8 l3-7 l4 6" fill="none" stroke="#1a2a30" stroke-width="2.2"/>
<path d="M10 6 q-4 3-2 7 q4 1 5 4" fill="none" stroke="#2a4a50" stroke-width="2"/>
<path d="M4 20 l1 8" fill="none" stroke="#2a4a50" stroke-width="1.5"/>
</svg>

<!-- list rows -->
<div class="abs" style="left:1px;top:568px;width:662px;height:28px;background:#ddf0fc"></div>
<svg class="abs" style="left:0;top:539px" width="664" height="70">
<g fill="none" stroke-linejoin="round" stroke-linecap="round">
<!-- eye row1 y=14 -->
<path d="M12.5 14.5 Q21 5.5 29.5 14.5 Q21 23.5 12.5 14.5 Z" stroke="#2b628e" stroke-width="1.3"/><circle cx="21" cy="14.5" r="2.8" stroke="#2b628e" stroke-width="1.3"/>
<path d="M12.5 43 Q21 34 29.5 43 Q21 52 12.5 43 Z" stroke="#2b628e" stroke-width="1.3"/><circle cx="21" cy="43" r="2.8" stroke="#2b628e" stroke-width="1.3"/>
<!-- distance icon -->
<path d="M53.8 22 L60.2 10.2 L67.2 17.2 Z" fill="#c8c8c8"/><path d="M60.2 10.2 L68.4 7.4 L67.7 17.5 L66.5 17.5 Z" fill="#5ab8e0"/><path d="M53.8 22 L60.2 10.2 L68.4 7.4 L67.7 17.6 Z M60.2 10.2 L67.5 17.4" fill="none" stroke="#3a98d0" stroke-width="1.1" stroke-linejoin="round"/>
<!-- spiral icon row2 -->
<path d="M67.3 36.8 Q59 37.5 54.2 42.1 L58.8 48.9" stroke="#1f5a84" stroke-width="1.3"/>
<circle cx="67.3" cy="36.8" r="2.1" fill="#1f5a84"/><circle cx="54.2" cy="42.1" r="2.1" fill="#1f5a84"/><circle cx="58.8" cy="48.9" r="2.1" fill="#1f5a84"/>
<!-- X -->
<path d="M232.5 9.5 L243 20 M243 9.5 L232.5 20" stroke="#2b628e" stroke-width="1.3"/>
<path d="M232.5 37.5 L243 48 M243 37.5 L232.5 48" stroke="#2b628e" stroke-width="1.3"/>
<!-- pencil x -->
<path d="M191 50 L192 45.5 L201.5 36 L204.8 39.3 L195.3 48.8 Z" stroke="#2b628e" stroke-width="1.2"/>
<circle cx="203" cy="48.5" r="3.5" fill="#e03030"/><path d="M201.5 47 l3 3 M204.5 47 l-3 3" stroke="#fff" stroke-width="1"/>
<!-- iso icon -->
<path d="M269.3 6.3 L280.6 15.3 L266.3 23.5 Z" fill="#9a9a9a"/>
<path d="M280.3 15 q-2.8 3.3-2.8 4.8 a2.8 2.8 0 0 0 5.6 0 q0-1.5-2.8-4.8 Z" fill="#2b7ac0"/>
<path d="M314.5 13.8 l4 3.8 l4-3.8" stroke="#999" stroke-width="1"/>
<path d="M444.5 13.8 l4 3.8 l4-3.8" stroke="#999" stroke-width="1"/>
<!-- slider small -->
<rect x="472.5" y="10.5" width="32" height="7" rx="3.5" fill="#b8b8b8"/>
<path d="M476 10.5 h12 v7 h-12 a3.5 3.5 0 0 1 0-7 Z" fill="#22506f"/>
<circle cx="487" cy="14" r="6.5" fill="#22506f" stroke="#fff" stroke-width="1"/>
<!-- slider large row2 -->
<rect x="471" y="38.5" width="38" height="8" rx="4" fill="#22506f"/>
<circle cx="503" cy="42.5" r="7" fill="#22506f" stroke="#fff" stroke-width="1"/>
</g>
<!-- play boxes -->
<rect x="527.5" y="3.5" width="23" height="23" fill="#dcdcdc" stroke="#bdbdbd"/>
<path d="M532 6.5 L547 19 L532 26 Z" fill="#22608c" stroke="#5ac8e8" stroke-width="0.8"/>
<rect x="553.5" y="3.5" width="23" height="23" fill="#dcdcdc" stroke="#bdbdbd"/>
<path d="M557 23 L560 7 L565 6 L564 23 Z M566 12 q4 1 5 6 h-5 Z" fill="none" stroke="#22608c" stroke-width="1"/>
<path d="M585 6.5 L598.5 14 L585 21 Z" fill="none" stroke="#22608c" stroke-width="1.5"/>
<path d="M585 6.5 L598.5 14 L585 21 Z" fill="none" stroke="#5ac8e8" stroke-width="0.5"/>
<!-- list icon -->
<rect x="635.5" y="6.5" width="15" height="16" fill="#f4f4f4" stroke="#999"/>
<rect x="637.5" y="8.5" width="3" height="3" fill="#e03030"/><rect x="637.5" y="13" width="3" height="3" fill="#4a9a70"/><rect x="637.5" y="17.5" width="3" height="3" fill="#2b7ac0"/>
<path d="M642 10 h7 M642 14.5 h7 M642 19 h7" stroke="#888" stroke-width="1"/>
<!-- colour squares row2 -->
<rect x="338.5" y="35.5" width="16" height="16" fill="#ef5555" stroke="#bbb"/>
<rect x="382.5" y="35.5" width="16" height="16" fill="#00ee00" stroke="#bbb"/>
<rect x="426.5" y="35.5" width="16" height="16" fill="#4f9ae6" stroke="#bbb"/>
<!-- bowtie -->
<path d="M530 37.5 h5 l5.5 5 h-10.5 Z M547.5 37.5 h-2.5 l-4.5 5 h7 Z" fill="#e04040"/>
<path d="M530 48.5 h5 l5.5-4.5 h-10.5 Z M547.5 48.5 h-2.5 l-4.5-4.5 h7 Z" fill="#3a88c0"/>
<rect x="553.5" y="31.5" width="23" height="23" fill="#dcdcdc" stroke="#bdbdbd"/>
<rect x="556.3" y="37.3" width="17.3" height="4.7" fill="#e04040"/>
<rect x="556.3" y="43.5" width="17.3" height="4.9" fill="#3a88c0"/>
</svg>
<!-- colour bar icon -->
<div class="abs" style="left:337px;top:545px;width:17px;height:17px;border:1px solid #888;background:linear-gradient(90deg,#c00000,#ff6000,#ffe000,#40c040,#2080ff,#4020a0)"></div>
<div class="abs txt" style="left:73px;top:547px;font-size:12.3px;letter-spacing:-0.25px;color:#222"><span style="font-style:italic;color:#1f7a1f">Distanc…ay:</span> 100</div>
<div class="abs txt" style="left:73px;top:575px;font-size:12.3px;letter-spacing:-0.25px;color:#222">spiral <span style="color:#7a6a9a">[</span><span style="color:#ee1a1a">…Editing]</span></div>
<div class="abs txt" style="left:288px;top:547px;font-size:12.3px;letter-spacing:-0.4px;color:#222">Is…</div>
<div class="abs txt" style="left:359px;top:547px;font-size:12.3px;letter-spacing:-0.2px;color:#222">Distance to …</div>
<!-- splitter grip -->
<svg class="abs" style="left:0;top:0" width="999" height="775"><g fill="#666"><rect x="489" y="535" width="1.3" height="1.3"/><rect x="489" y="537" width="1.3" height="1.3"/><rect x="491" y="535" width="1.3" height="1.3"/><rect x="491" y="537" width="1.3" height="1.3"/><rect x="493" y="535" width="1.3" height="1.3"/><rect x="493" y="537" width="1.3" height="1.3"/><rect x="495" y="535" width="1.3" height="1.3"/><rect x="495" y="537" width="1.3" height="1.3"/><rect x="497" y="535" width="1.3" height="1.3"/><rect x="497" y="537" width="1.3" height="1.3"/><rect x="499" y="535" width="1.3" height="1.3"/><rect x="499" y="537" width="1.3" height="1.3"/><rect x="501" y="535" width="1.3" height="1.3"/><rect x="501" y="537" width="1.3" height="1.3"/><rect x="503" y="535" width="1.3" height="1.3"/><rect x="503" y="537" width="1.3" height="1.3"/><rect x="505" y="535" width="1.3" height="1.3"/><rect x="505" y="537" width="1.3" height="1.3"/><rect x="507" y="535" width="1.3" height="1.3"/><rect x="507" y="537" width="1.3" height="1.3"/><rect x="509" y="535" width="1.3" height="1.3"/><rect x="509" y="537" width="1.3" height="1.3"/><rect x="665" y="647" width="1.3" height="1.3"/><rect x="665" y="649" width="1.3" height="1.3"/><rect x="665" y="651" width="1.3" height="1.3"/><rect x="665" y="653" width="1.3" height="1.3"/><rect x="665" y="655" width="1.3" height="1.3"/><rect x="665" y="657" width="1.3" height="1.3"/><rect x="665" y="659" width="1.3" height="1.3"/><rect x="665" y="661" width="1.3" height="1.3"/><rect x="665" y="663" width="1.3" height="1.3"/><rect x="665" y="665" width="1.3" height="1.3"/><rect x="665" y="667" width="1.3" height="1.3"/><rect x="667" y="647" width="1.3" height="1.3"/><rect x="667" y="649" width="1.3" height="1.3"/><rect x="667" y="651" width="1.3" height="1.3"/><rect x="667" y="653" width="1.3" height="1.3"/><rect x="667" y="655" width="1.3" height="1.3"/><rect x="667" y="657" width="1.3" height="1.3"/><rect x="667" y="659" width="1.3" height="1.3"/><rect x="667" y="661" width="1.3" height="1.3"/><rect x="667" y="663" width="1.3" height="1.3"/><rect x="667" y="665" width="1.3" height="1.3"/><rect x="667" y="667" width="1.3" height="1.3"/></g></svg>
<!-- props -->
<svg class="abs" style="left:682px;top:544px" width="20" height="20">
<path d="M15.5 3.5 Q7 4 2.5 9.5 L6.5 15.5" fill="none" stroke="#2b628e" stroke-width="1.3"/>
<circle cx="15.5" cy="3.5" r="2" fill="#2b628e"/><circle cx="2.5" cy="9.5" r="2" fill="#2b628e"/><circle cx="6.5" cy="15.5" r="2" fill="#2b628e"/>
</svg>
<div class="abs txt" style="left:704px;top:546.5px;font-size:12px;font-weight:bold;color:#222">spiral</div>
<div class="abs" style="left:977px;top:569px;width:8px;height:200px;background:#ebebeb"></div>
<div class="abs txt lbl" style="left:683px;top:574px">Slice mode:</div>
<div class="abs inp" style="left:765px;top:569px;width:212px;height:24px"></div>
<div class="abs txt" style="left:774px;top:574px;font-size:12px;color:#222">From Scene</div>
<svg class="abs" style="left:963px;top:577px" width="10" height="7"><path d="M0.5 1 l4 4 l4-4" fill="none" stroke="#888" stroke-width="1"/></svg>
<div class="abs txt lbl" style="left:683px;top:606px">Line width:</div>
<div class="abs inp" style="left:763px;top:601px;width:177px;height:24px"></div>
<div class="abs txt" style="left:772px;top:606px;font-size:12px">3</div>
<div class="abs txt lbl" style="left:946px;top:606px">pixels</div>
<div class="abs txt lbl" style="left:683px;top:638px">Node size:</div>
<div class="abs inp" style="left:763px;top:633px;width:177px;height:24px"></div>
<div class="abs txt" style="left:772px;top:638px;font-size:12px">10</div>
<div class="abs txt lbl" style="left:946px;top:638px">pixels</div>
<div class="abs txt lbl" style="left:683px;top:670px">Ribbon width:</div>
<div class="abs inp" style="left:763px;top:665px;width:158px;height:24px"></div>
<div class="abs txt" style="left:772px;top:670px;font-size:12px">32</div>
<div class="abs chk" style="left:929px;top:671px"></div>
<div class="abs txt lbl" style="left:945px;top:670px">pixels</div>
<div class="abs txt lbl" style="left:683px;top:702px">Point size:</div>
<div class="abs inp" style="left:763px;top:697px;width:158px;height:24px"></div>
<div class="abs txt" style="left:772px;top:702px;font-size:12px">8</div>
<div class="abs chk" style="left:929px;top:702px"></div>
<div class="abs txt lbl" style="left:945px;top:702px">pixels</div>
<div class="abs chk" style="left:683px;top:730px"></div>
<div class="abs txt lbl" style="left:699px;top:730px">Show tangent cones</div>
<div class="abs chk" style="left:683px;top:753px"></div>
<div class="abs txt lbl" style="left:699px;top:753px">Show bezier control points</div>
<svg class="abs" style="left:0;top:560px" width="999" height="215">
<g fill="none" stroke="#a0a0a0" stroke-width="1" stroke-linecap="round">
<path d="M928.5 48 l3-3 l3 3 M928.5 55 l3 3 l3-3"/>
<path d="M928.5 80 l3-3 l3 3 M928.5 87 l3 3 l3-3"/>
<path d="M909.5 112 l3-3 l3 3 M909.5 119 l3 3 l3-3"/>
<path d="M909.5 144 l3-3 l3 3 M909.5 151 l3 3 l3-3"/>
</g>
<g fill="none" stroke="#fff" stroke-width="1.4" stroke-linecap="round" stroke-linejoin="round">
<path d="M932 117 l2.5 2.5 l4.5-5"/>
<path d="M932 148 l2.5 2.5 l4.5-5"/>
<path d="M686 176 l2.5 2.5 l4.5-5"/>
<path d="M686 199 l2.5 2.5 l4.5-5"/>
</g>
</svg>
<!-- orange highlight rects -->
<div class="abs" style="left:542px;top:555px;width:45px;height:53px;border:5px solid #fb5331;box-shadow:2px 3px 4px rgba(0,0,0,0.35), inset 2px 3px 4px rgba(0,0,0,0.3)"></div>
<div class="abs" style="left:667px;top:654px;width:321px;height:43px;border:5px solid #fb5331;box-shadow:2px 3px 4px rgba(0,0,0,0.35), inset 2px 3px 4px rgba(0,0,0,0.3)"></div>

</body></html>
